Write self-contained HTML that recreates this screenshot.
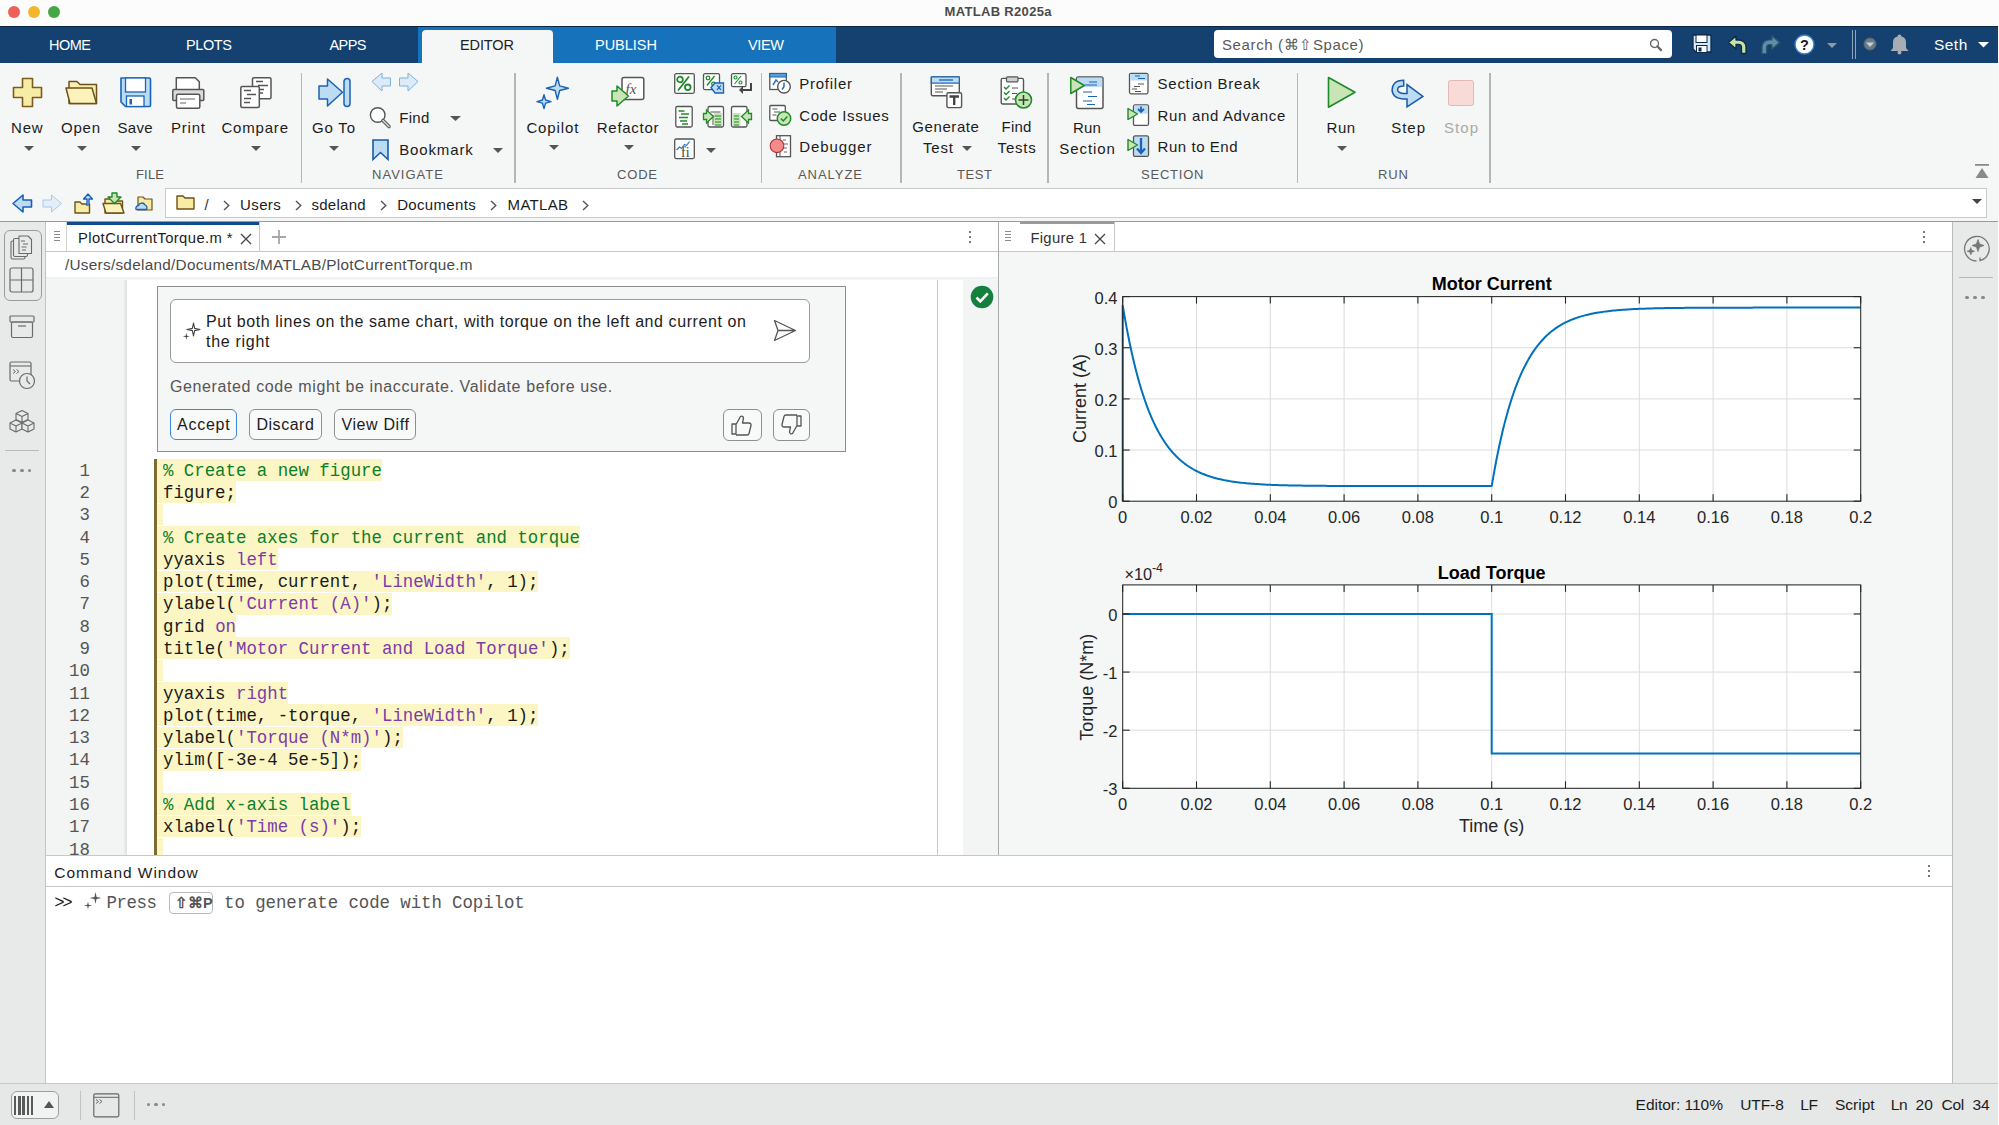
<!DOCTYPE html><html><head><meta charset="utf-8"><style>
html,body{margin:0;padding:0;width:1999px;height:1125px;overflow:hidden;background:#f5f6f6;}
.t{position:absolute;white-space:pre;}
.r{position:absolute;}
svg.r{overflow:visible}
</style></head><body>
<div class="r" style="left:0px;top:0px;width:1999px;height:26px;background:#fcfcfc"></div>
<div class="r" style="left:8px;top:6px;width:12px;height:12px;background:#ef5f57;border-radius:50%"></div>
<div class="r" style="left:28px;top:6px;width:12px;height:12px;background:#f4b72c;border-radius:50%"></div>
<div class="r" style="left:48px;top:6px;width:12px;height:12px;background:#45a644;border-radius:50%"></div>
<div class="t" style="left:944.50px;top:5.20px;font-size:13px;line-height:13px;font-family:'Liberation Sans',sans-serif;font-weight:bold;color:#4b4b4b;letter-spacing:0.328px;">MATLAB R2025a</div>
<div class="r" style="left:0px;top:26px;width:1999px;height:37px;background:#14416f"></div>
<div class="r" style="left:0px;top:26px;width:1999px;height:1px;background:#0b2544"></div>
<div class="r" style="left:418px;top:27px;width:418px;height:36px;background:#1772bc"></div>
<div class="r" style="left:422px;top:30px;width:131px;height:33px;background:#f5f6f6;border-radius:4px 4px 0 0"></div>
<div class="t" style="left:49.00px;top:37.73px;font-size:14.5px;line-height:14.5px;font-family:'Liberation Sans',sans-serif;color:#ffffff;letter-spacing:-0.500px;">HOME</div>
<div class="t" style="left:186.00px;top:37.73px;font-size:14.5px;line-height:14.5px;font-family:'Liberation Sans',sans-serif;color:#ffffff;letter-spacing:-0.386px;">PLOTS</div>
<div class="t" style="left:329.50px;top:37.73px;font-size:14.5px;line-height:14.5px;font-family:'Liberation Sans',sans-serif;color:#ffffff;letter-spacing:-0.563px;">APPS</div>
<div class="t" style="left:460.00px;top:37.73px;font-size:14.5px;line-height:14.5px;font-family:'Liberation Sans',sans-serif;color:#222222;letter-spacing:-0.104px;">EDITOR</div>
<div class="t" style="left:595.00px;top:37.73px;font-size:14.5px;line-height:14.5px;font-family:'Liberation Sans',sans-serif;color:#ffffff;letter-spacing:-0.009px;">PUBLISH</div>
<div class="t" style="left:748.00px;top:37.73px;font-size:14.5px;line-height:14.5px;font-family:'Liberation Sans',sans-serif;color:#ffffff;letter-spacing:-0.353px;">VIEW</div>
<div class="r" style="left:1214px;top:30px;width:458px;height:28px;background:#ffffff;border-radius:4px"></div>
<div class="t" style="left:1222.00px;top:36.50px;font-size:15px;line-height:15px;font-family:'Liberation Sans',sans-serif;color:#5a5a5a;letter-spacing:0.619px;">Search (⌘⇧Space)</div>
<div class="r" style="left:0px;top:63px;width:1999px;height:124px;background:#f5f6f6"></div>
<div class="r" style="left:165px;top:188px;width:1822px;height:30px;background:#fff;border:1px solid #c9caca;box-sizing:border-box"></div>
<div class="r" style="left:0px;top:221px;width:1999px;height:1px;background:#9a9a9a"></div>
<div class="r" style="left:0px;top:222px;width:45px;height:861px;background:#e8e9e9"></div>
<div class="r" style="left:45px;top:222px;width:1px;height:861px;background:#c2c3c3"></div>
<div class="r" style="left:46px;top:222px;width:952px;height:29px;background:#ffffff"></div>
<div class="r" style="left:46px;top:251px;width:952px;height:1px;background:#c6c7c7"></div>
<div class="r" style="left:46px;top:252px;width:952px;height:25px;background:#ffffff"></div>
<div class="r" style="left:46px;top:277px;width:952px;height:578px;background:#ffffff"></div>
<div class="r" style="left:46px;top:277px;width:81px;height:578px;background:#f3f4f4"></div>
<div class="r" style="left:123px;top:280px;width:4px;height:575px;background:linear-gradient(to right,#f3f4f4,#dedfdf)"></div>
<div class="r" style="left:937px;top:277px;width:1px;height:578px;background:#c8c8c8"></div>
<div class="r" style="left:963px;top:277px;width:35px;height:578px;background:#f3f4f4"></div>
<div class="r" style="left:998px;top:222px;width:1px;height:633px;background:#a9aaaa"></div>
<div class="r" style="left:999px;top:222px;width:953px;height:29px;background:#ffffff"></div>
<div class="r" style="left:999px;top:251px;width:953px;height:1px;background:#c6c7c7"></div>
<div class="r" style="left:999px;top:252px;width:953px;height:603px;background:#f5f6f6"></div>
<div class="r" style="left:1952px;top:222px;width:47px;height:861px;background:#e8e9e9"></div>
<div class="r" style="left:1952px;top:222px;width:1px;height:861px;background:#b9baba"></div>
<div class="r" style="left:46px;top:855px;width:1906px;height:1px;background:#c6c7c7"></div>
<div class="r" style="left:46px;top:856px;width:1906px;height:30px;background:#ffffff"></div>
<div class="r" style="left:46px;top:886px;width:1906px;height:1px;background:#c6c7c7"></div>
<div class="r" style="left:46px;top:887px;width:1906px;height:196px;background:#ffffff"></div>
<div class="r" style="left:0px;top:1083px;width:1999px;height:1px;background:#c6c7c7"></div>
<div class="r" style="left:0px;top:1084px;width:1999px;height:41px;background:#e6e7e7"></div>
<div class="r" style="left:300.5px;top:73px;width:1.5px;height:110px;background:#b4b5b5"></div>
<div class="r" style="left:514px;top:73px;width:1.5px;height:110px;background:#b4b5b5"></div>
<div class="r" style="left:760.5px;top:73px;width:1.5px;height:110px;background:#b4b5b5"></div>
<div class="r" style="left:900px;top:73px;width:1.5px;height:110px;background:#b4b5b5"></div>
<div class="r" style="left:1047px;top:73px;width:1.5px;height:110px;background:#b4b5b5"></div>
<div class="r" style="left:1296.7px;top:73px;width:1.5px;height:110px;background:#b4b5b5"></div>
<div class="r" style="left:1489px;top:73px;width:1.5px;height:110px;background:#b4b5b5"></div>
<div class="t" style="left:136.00px;top:168.00px;font-size:13px;line-height:13px;font-family:'Liberation Sans',sans-serif;color:#595959;letter-spacing:0.182px;">FILE</div>
<div class="t" style="left:372.00px;top:168.00px;font-size:13px;line-height:13px;font-family:'Liberation Sans',sans-serif;color:#595959;letter-spacing:1.027px;">NAVIGATE</div>
<div class="t" style="left:617.00px;top:168.00px;font-size:13px;line-height:13px;font-family:'Liberation Sans',sans-serif;color:#595959;letter-spacing:0.813px;">CODE</div>
<div class="t" style="left:798.00px;top:168.00px;font-size:13px;line-height:13px;font-family:'Liberation Sans',sans-serif;color:#595959;letter-spacing:0.953px;">ANALYZE</div>
<div class="t" style="left:957.00px;top:168.00px;font-size:13px;line-height:13px;font-family:'Liberation Sans',sans-serif;color:#595959;letter-spacing:0.592px;">TEST</div>
<div class="t" style="left:1141.00px;top:168.00px;font-size:13px;line-height:13px;font-family:'Liberation Sans',sans-serif;color:#595959;letter-spacing:0.786px;">SECTION</div>
<div class="t" style="left:1378.00px;top:168.00px;font-size:13px;line-height:13px;font-family:'Liberation Sans',sans-serif;color:#595959;letter-spacing:0.917px;">RUN</div>
<svg class="r" style="left:12px;top:77px" width="31" height="31" viewBox="0 0 31 31"><path d="M10.5 1.5 h10 v9 h9 v10 h-9 v9 h-10 v-9 h-9 v-10 h9 z" fill="#f7eca6" stroke="#7b5b1e" stroke-width="1.6" stroke-linejoin="round"/></svg>
<svg class="r" style="left:65px;top:80px" width="33" height="25" viewBox="0 0 33 25"><path d="M4 1.5 h8 l3 3 h16.5 v19 h-27.5 z" fill="#f9efb3" stroke="#6f5218" stroke-width="1.5" stroke-linejoin="round"/><path d="M1 8 h26 l4.5 15.5 h-26.5 z" fill="#fbf3bb" stroke="#6f5218" stroke-width="1.5" stroke-linejoin="round"/></svg>
<svg class="r" style="left:120px;top:77px" width="31" height="30" viewBox="0 0 31 30"><path d="M1 1 h28 a1.5 1.5 0 0 1 1.5 1.5 v26 a1 1 0 0 1 -1 1 h-24 l-4.5 -4.5 z" fill="#bcdcf4" stroke="#1a63b6" stroke-width="1.6" stroke-linejoin="round"/><rect x="5.5" y="1" width="20" height="14" fill="#fff" stroke="#1a63b6" stroke-width="1.3"/><rect x="6.5" y="19" width="17.5" height="10.5" fill="#fff" stroke="#1a63b6" stroke-width="1.3"/><rect x="9.5" y="22" width="2.5" height="5.5" fill="#1a63b6"/></svg>
<svg class="r" style="left:172px;top:77px" width="33" height="32" viewBox="0 0 33 32"><path d="M4.3 0.8 h19 l4 4 v8 h-23 z" fill="#fff" stroke="#555" stroke-width="1.5" stroke-linejoin="round"/><rect x="0.8" y="12.5" width="31" height="11" rx="1" fill="#dcdcdc" stroke="#555" stroke-width="1.5"/><rect x="4.5" y="17.2" width="23.3" height="14" rx="1.5" fill="#fff" stroke="#555" stroke-width="1.5"/><path d="M8 22 h15 M8 26 h6" stroke="#666" stroke-width="1.2"/></svg>
<svg class="r" style="left:240px;top:77px" width="32" height="32" viewBox="0 0 32 32"><rect x="12.5" y="0.8" width="18.5" height="21" rx="1.5" fill="#fff" stroke="#555" stroke-width="1.5"/><path d="M16 4.5 h7 M18 8.5 h10 M18 12.5 h6 M18 16 h5" stroke="#555" stroke-width="1.3"/><rect x="0.8" y="9.5" width="18.5" height="21" rx="1.5" fill="#fff" stroke="#555" stroke-width="1.5"/><path d="M4 13.5 h7 M7 17.5 h9 M4 21.5 h7 M4 25.5 h6" stroke="#555" stroke-width="1.3"/></svg>
<div class="t" style="left:11.00px;top:120.10px;font-size:15px;line-height:15px;font-family:'Liberation Sans',sans-serif;color:#1c1c1c;letter-spacing:0.796px;">New</div>
<div class="t" style="left:61.00px;top:120.10px;font-size:15px;line-height:15px;font-family:'Liberation Sans',sans-serif;color:#1c1c1c;letter-spacing:0.768px;">Open</div>
<div class="t" style="left:117.50px;top:120.10px;font-size:15px;line-height:15px;font-family:'Liberation Sans',sans-serif;color:#1c1c1c;letter-spacing:0.270px;">Save</div>
<div class="t" style="left:171.00px;top:120.10px;font-size:15px;line-height:15px;font-family:'Liberation Sans',sans-serif;color:#1c1c1c;letter-spacing:0.789px;">Print</div>
<div class="t" style="left:221.40px;top:120.10px;font-size:15px;line-height:15px;font-family:'Liberation Sans',sans-serif;color:#1c1c1c;letter-spacing:0.818px;">Compare</div>
<svg class="r" style="left:23.7px;top:145.5px" width="10" height="5" viewBox="0 0 10 5"><path d="M0 0 L10 0 L5.0 5 Z" fill="#555555"/></svg>
<svg class="r" style="left:76.5px;top:145.5px" width="10" height="5" viewBox="0 0 10 5"><path d="M0 0 L10 0 L5.0 5 Z" fill="#555555"/></svg>
<svg class="r" style="left:131.3px;top:145.5px" width="10" height="5" viewBox="0 0 10 5"><path d="M0 0 L10 0 L5.0 5 Z" fill="#555555"/></svg>
<svg class="r" style="left:251.0px;top:145.5px" width="10" height="5" viewBox="0 0 10 5"><path d="M0 0 L10 0 L5.0 5 Z" fill="#555555"/></svg>
<svg class="r" style="left:318px;top:78px" width="33" height="29" viewBox="0 0 33 29"><path d="M1 8 h8.5 v-7 l15 13.3 l-15 13.7 v-7 h-8.5 z" fill="#bcdcf4" stroke="#1a63b6" stroke-width="1.5" stroke-linejoin="round"/><rect x="26" y="0.5" width="6" height="28" rx="3" fill="#bcdcf4" stroke="#1a63b6" stroke-width="1.5"/></svg>
<div class="t" style="left:312.00px;top:120.10px;font-size:15px;line-height:15px;font-family:'Liberation Sans',sans-serif;color:#1c1c1c;letter-spacing:0.813px;">Go To</div>
<svg class="r" style="left:329.0px;top:145.5px" width="10" height="5" viewBox="0 0 10 5"><path d="M0 0 L10 0 L5.0 5 Z" fill="#555555"/></svg>
<svg class="r" style="left:371px;top:72px" width="48" height="20" viewBox="0 0 48 20"><path d="M1 9.5 l10 -8.5 v5 h8.5 v8 h-8.5 v5 z" fill="#ddebf8" stroke="#7fb0e0" stroke-width="1" stroke-linejoin="round"/><path d="M47 9.5 l-10 -8.5 v5 h-8.5 v8 h8.5 v5 z" fill="#ddebf8" stroke="#7fb0e0" stroke-width="1" stroke-linejoin="round"/></svg>
<svg class="r" style="left:369px;top:106px" width="23" height="22" viewBox="0 0 23 22"><circle cx="8.7" cy="9" r="7.3" fill="#fff" stroke="#555" stroke-width="1.4"/><path d="M14 14.5 l6 6" stroke="#555" stroke-width="3.6" stroke-linecap="round"/><path d="M14 14.5 l6 6" stroke="#d8d8d8" stroke-width="1.6" stroke-linecap="round"/></svg>
<div class="t" style="left:399.20px;top:110.00px;font-size:15px;line-height:15px;font-family:'Liberation Sans',sans-serif;color:#1c1c1c;letter-spacing:0.340px;">Find</div>
<svg class="r" style="left:450.0px;top:115.8px" width="11" height="5" viewBox="0 0 11 5"><path d="M0 0 L11 0 L5.5 5 Z" fill="#555555"/></svg>
<svg class="r" style="left:372px;top:139px" width="17" height="21" viewBox="0 0 17 21"><path d="M1 1 h15 v19.5 l-7.5 -7 l-7.5 7 z" fill="#bcdcf4" stroke="#1a5aa8" stroke-width="1.6" stroke-linejoin="miter"/></svg>
<div class="t" style="left:399.20px;top:141.50px;font-size:15px;line-height:15px;font-family:'Liberation Sans',sans-serif;color:#1c1c1c;letter-spacing:0.868px;">Bookmark</div>
<svg class="r" style="left:493.0px;top:147.8px" width="10" height="5" viewBox="0 0 10 5"><path d="M0 0 L10 0 L5.0 5 Z" fill="#555555"/></svg>
<svg class="r" style="left:530px;top:70px" width="40" height="40" viewBox="0 0 40 40"><polygon points="27.40,7.20 29.66,15.94 38.40,18.20 29.66,20.46 27.40,29.20 25.14,20.46 16.40,18.20 25.14,15.94" fill="#bcdcf4" stroke="#1a63b6" stroke-width="1.4" stroke-linejoin="round"/><polygon points="14.00,24.60 15.56,30.04 21.00,31.60 15.56,33.16 14.00,38.60 12.44,33.16 7.00,31.60 12.44,30.04" fill="#bcdcf4" stroke="#1a63b6" stroke-width="1.4" stroke-linejoin="round"/></svg>
<div class="t" style="left:526.40px;top:120.10px;font-size:15px;line-height:15px;font-family:'Liberation Sans',sans-serif;color:#1c1c1c;letter-spacing:0.884px;">Copilot</div>
<svg class="r" style="left:548.6px;top:145.0px" width="10" height="5" viewBox="0 0 10 5"><path d="M0 0 L10 0 L5.0 5 Z" fill="#555555"/></svg>
<svg class="r" style="left:610px;top:76px" width="36" height="32" viewBox="0 0 36 32"><rect x="12" y="1.4" width="21.8" height="22" rx="2" fill="#fff" stroke="#555" stroke-width="1.5"/><text x="15.5" y="17.5" font-family="Liberation Serif" font-style="italic" font-size="15" fill="#555">fx</text><path d="M2 15 h5 v-5 l11.5 10 l-11.5 10 v-5 h-5 z" fill="#c9e5b5" stroke="#1f8a2a" stroke-width="1.5" stroke-linejoin="round"/></svg>
<div class="t" style="left:596.80px;top:120.10px;font-size:15px;line-height:15px;font-family:'Liberation Sans',sans-serif;color:#1c1c1c;letter-spacing:0.716px;">Refactor</div>
<svg class="r" style="left:623.8px;top:145.0px" width="10" height="5" viewBox="0 0 10 5"><path d="M0 0 L10 0 L5.0 5 Z" fill="#555555"/></svg>
<svg class="r" style="left:674px;top:73px" width="80" height="90" viewBox="0 0 80 90"><rect x="0.7" y="0.7" width="19.6" height="19.6" rx="1.5" fill="#fff" stroke="#555" stroke-width="1.3"/><circle cx="6" cy="6.5" r="2.8" fill="none" stroke="#1f8a2a" stroke-width="1.8"/><circle cx="13.8" cy="14.3" r="2.8" fill="none" stroke="#1f8a2a" stroke-width="1.8"/><path d="M4 17.5 l11 -14" stroke="#1f8a2a" stroke-width="1.8"/><rect x="29.5" y="0.7" width="16" height="16" rx="1.5" fill="#fff" stroke="#555" stroke-width="1.3"/><circle cx="34" cy="5" r="1.8" fill="none" stroke="#1f8a2a" stroke-width="1.3"/><circle cx="39.5" cy="11" r="1.8" fill="none" stroke="#1f8a2a" stroke-width="1.3"/><path d="M33 12.5 l7.5 -9.5" stroke="#1f8a2a" stroke-width="1.3"/><path d="M37 14.5 l4 -4.5 h8.5 v10 h-8.5 z" fill="#bcdcf4" stroke="#1a63b6" stroke-width="1.3"/><path d="M43 12.3 l4 4.5 M47 12.3 l-4 4.5" stroke="#1a63b6" stroke-width="1.2"/><rect x="57.5" y="0.7" width="14.5" height="13" rx="1.5" fill="#fff" stroke="#555" stroke-width="1.3"/><circle cx="61.5" cy="4.5" r="1.5" fill="none" stroke="#1f8a2a" stroke-width="1.1"/><circle cx="66.5" cy="9.5" r="1.5" fill="none" stroke="#1f8a2a" stroke-width="1.1"/><path d="M60.5 11 l6.5 -8" stroke="#1f8a2a" stroke-width="1.1"/><path d="M76 10 v6 h-7 v-3 l-4 4 l4 4 v-3 h9 v-8 z" fill="#444"/><rect x="1.8" y="33.5" width="16.4" height="20.5" rx="1.5" fill="#fff" stroke="#555" stroke-width="1.3"/><path d="M4.5 38 h6 M7 41 h8 M5 44.5 h9 M6 48 h7 M8 51 h6" stroke="#1f8a2a" stroke-width="1.4"/><rect x="34" y="33.5" width="15.5" height="20.5" rx="1.5" fill="#fff" stroke="#555" stroke-width="1.3"/><path d="M36.5 39 h10 M39 42 v10" stroke="#555" stroke-width="1"/><rect x="40" y="40" width="8" height="13" fill="#c9e5b5"/><path d="M41 43 h6 M41 46 h6 M41 49 h6 M41 52 h6" stroke="#1f8a2a" stroke-width="1.2"/><path d="M29.5 40.5 h3 v-3.5 l7 6.5 l-7 6.5 v-3.5 h-3 z" fill="#c9e5b5" stroke="#1f8a2a" stroke-width="1.3"/><rect x="57.5" y="33.5" width="15.5" height="20.5" rx="1.5" fill="#fff" stroke="#555" stroke-width="1.3"/><rect x="58.5" y="40" width="8" height="13" fill="#c9e5b5"/><path d="M60 43 h5 M60 46 h5 M60 49 h5 M60 52 h5" stroke="#1f8a2a" stroke-width="1.2"/><path d="M77.5 40.5 h-3 v-3.5 l-7 6.5 l7 6.5 v-3.5 h3 z" fill="#c9e5b5" stroke="#1f8a2a" stroke-width="1.3"/><rect x="0.7" y="66" width="19.6" height="19.6" rx="1.5" fill="#fff" stroke="#555" stroke-width="1.3"/><path d="M2.5 77 l3 -3 l2 1.5 l3 -4 l2 1 l3 -4" stroke="#2f78c8" stroke-width="1.2" fill="none"/><text x="7" y="84" font-family="Liberation Serif" font-size="14" fill="#444">fi</text></svg>
<svg class="r" style="left:705.5px;top:147.8px" width="10" height="5" viewBox="0 0 10 5"><path d="M0 0 L10 0 L5.0 5 Z" fill="#555555"/></svg>
<svg class="r" style="left:769px;top:72px" width="24" height="24" viewBox="0 0 24 24"><rect x="0.8" y="1.5" width="16.5" height="16" fill="#fff" stroke="#555" stroke-width="1.3"/><rect x="0.8" y="1.5" width="16.5" height="3.5" fill="#5c9ddc" stroke="#1a63b6" stroke-width="1"/><path d="M4 13 l3 -5 l2 2" stroke="#2f78c8" stroke-width="1.6" fill="none"/><circle cx="15" cy="14.7" r="6.3" fill="#fff" stroke="#555" stroke-width="1.4"/><path d="M15 10.5 v4.2 l-2 3" stroke="#1a63b6" stroke-width="1.4" fill="none"/></svg>
<div class="t" style="left:799.20px;top:76.20px;font-size:15px;line-height:15px;font-family:'Liberation Sans',sans-serif;color:#1c1c1c;letter-spacing:0.755px;">Profiler</div>
<svg class="r" style="left:769px;top:104px" width="24" height="24" viewBox="0 0 24 24"><rect x="0.8" y="1.5" width="15.5" height="15" rx="1" fill="#fff" stroke="#555" stroke-width="1.3"/><path d="M3.5 5 h5 M5 8 h6 M3.5 11 h4" stroke="#555" stroke-width="1.1"/><circle cx="15" cy="14.5" r="6.7" fill="#c9e5b5" stroke="#1f8a2a" stroke-width="1.5"/><path d="M11.8 14.5 l2.4 2.4 l4.2 -4.5" stroke="#1f8a2a" stroke-width="1.5" fill="none"/></svg>
<div class="t" style="left:799.20px;top:107.90px;font-size:15px;line-height:15px;font-family:'Liberation Sans',sans-serif;color:#1c1c1c;letter-spacing:0.622px;">Code Issues</div>
<svg class="r" style="left:769px;top:135px" width="23" height="23" viewBox="0 0 23 23"><rect x="7.5" y="0.7" width="14" height="21" fill="#fff" stroke="#555" stroke-width="1.3"/><path d="M11 0.7 v21" stroke="#555" stroke-width="1"/><path d="M14 5 h3 M15 9 h4 M14 13 h4 M15 17 h3" stroke="#666" stroke-width="1"/><circle cx="8" cy="10.8" r="6.8" fill="#f28b8b" stroke="#b53131" stroke-width="1.1"/></svg>
<div class="t" style="left:799.20px;top:138.90px;font-size:15px;line-height:15px;font-family:'Liberation Sans',sans-serif;color:#1c1c1c;letter-spacing:0.917px;">Debugger</div>
<svg class="r" style="left:930px;top:76px" width="33" height="33" viewBox="0 0 33 33"><rect x="1.3" y="0.9" width="28" height="18.8" rx="1.5" fill="#fff" stroke="#555" stroke-width="1.4"/><rect x="1.3" y="0.9" width="28" height="6.2" fill="#bcdcf4" stroke="#1a63b6" stroke-width="1.2"/><path d="M9 4 h14" stroke="#1a63b6" stroke-width="1.3"/><path d="M5 10 h18 M5 13 h12 M5 16 h8" stroke="#555" stroke-width="1.1"/><rect x="16.9" y="16.8" width="14.7" height="14.8" rx="1.5" fill="#fff" stroke="#555" stroke-width="1.4"/><path d="M19.5 20.5 h9.5 M24.2 20.5 v8.5" stroke="#444" stroke-width="2.4"/></svg>
<div class="t" style="left:912.30px;top:119.40px;font-size:15px;line-height:15px;font-family:'Liberation Sans',sans-serif;color:#1c1c1c;letter-spacing:0.580px;">Generate</div>
<div class="t" style="left:923.00px;top:140.30px;font-size:15px;line-height:15px;font-family:'Liberation Sans',sans-serif;color:#1c1c1c;letter-spacing:0.797px;">Test</div>
<svg class="r" style="left:961.6px;top:146.0px" width="10" height="5" viewBox="0 0 10 5"><path d="M0 0 L10 0 L5.0 5 Z" fill="#555555"/></svg>
<svg class="r" style="left:1000px;top:76px" width="34" height="34" viewBox="0 0 34 34"><rect x="1.2" y="2.4" width="22.3" height="25.6" rx="1.5" fill="#fff" stroke="#555" stroke-width="1.4"/><rect x="6.5" y="0.8" width="11.5" height="5" rx="1" fill="#cfcfcf" stroke="#555" stroke-width="1.2"/><path d="M4 11 l2 2 l3.5 -3.5 M4 16.5 l2 2 l3.5 -3.5 M4 22 l2 2 l3.5 -3.5" stroke="#1f8a2a" stroke-width="1.4" fill="none"/><path d="M12 12 h6 M12 17.5 h5 M12 23 h4" stroke="#555" stroke-width="1.2"/><circle cx="23.5" cy="24" r="8" fill="#c9e5b5" stroke="#1f8a2a" stroke-width="1.6"/><path d="M23.5 19 v10 M18.5 24 h10" stroke="#1f4a22" stroke-width="1.5"/></svg>
<div class="t" style="left:1001.50px;top:119.40px;font-size:15px;line-height:15px;font-family:'Liberation Sans',sans-serif;color:#1c1c1c;letter-spacing:0.240px;">Find</div>
<div class="t" style="left:997.60px;top:140.30px;font-size:15px;line-height:15px;font-family:'Liberation Sans',sans-serif;color:#1c1c1c;letter-spacing:0.798px;">Tests</div>
<svg class="r" style="left:1069px;top:76px" width="36" height="34" viewBox="0 0 36 34"><rect x="7.5" y="0.9" width="26.5" height="31.5" rx="2" fill="#fff" stroke="#555" stroke-width="1.5"/><rect x="8.2" y="1.6" width="25" height="9.5" fill="#bcdcf4"/><path d="M20 6 h8 M16 9 h12 M14 16 h9 M19 20.5 h9 M14 25 h9 M18 28.5 h8" stroke="#1a63b6" stroke-width="1.2"/><path d="M1.8 1.5 l13.5 8 l-13.5 8 z" fill="#c9e5b5" stroke="#1f8a2a" stroke-width="1.5" stroke-linejoin="round"/></svg>
<div class="t" style="left:1072.90px;top:119.80px;font-size:15px;line-height:15px;font-family:'Liberation Sans',sans-serif;color:#1c1c1c;letter-spacing:0.191px;">Run</div>
<div class="t" style="left:1059.30px;top:140.80px;font-size:15px;line-height:15px;font-family:'Liberation Sans',sans-serif;color:#1c1c1c;letter-spacing:0.911px;">Section</div>
<svg class="r" style="left:1128px;top:72px" width="22" height="23" viewBox="0 0 22 23"><rect x="1.5" y="1.3" width="18.5" height="20.5" rx="1.5" fill="#fff" stroke="#555" stroke-width="1.3"/><rect x="2.2" y="2" width="17" height="6.5" fill="#bcdcf4"/><path d="M7 4 h5 M10 6.5 h7" stroke="#1a63b6" stroke-width="1.1"/><path d="M10 12 h6 M6 14.5 h6 M4 17 h5 M7 19.5 h6" stroke="#555" stroke-width="1"/></svg>
<div class="t" style="left:1157.60px;top:76.40px;font-size:15px;line-height:15px;font-family:'Liberation Sans',sans-serif;color:#1c1c1c;letter-spacing:0.726px;">Section Break</div>
<svg class="r" style="left:1127px;top:104px" width="24" height="24" viewBox="0 0 24 24"><rect x="6.5" y="0.9" width="15" height="20.5" rx="1.5" fill="#fff" stroke="#555" stroke-width="1.3"/><rect x="7.2" y="1.6" width="13.6" height="8" fill="#bcdcf4"/><path d="M14 2.5 v5 M11 5 l3 3 l3 -3" stroke="#1a63b6" stroke-width="1.8" fill="none"/><path d="M1 4.5 l9.5 5.5 l-9.5 5.5 z" fill="#c9e5b5" stroke="#1f8a2a" stroke-width="1.4" stroke-linejoin="round"/></svg>
<div class="t" style="left:1157.60px;top:108.10px;font-size:15px;line-height:15px;font-family:'Liberation Sans',sans-serif;color:#1c1c1c;letter-spacing:0.662px;">Run and Advance</div>
<svg class="r" style="left:1127px;top:135px" width="24" height="24" viewBox="0 0 24 24"><rect x="6.5" y="0.9" width="15" height="20.5" rx="1.5" fill="#bcdcf4" stroke="#555" stroke-width="1.3"/><path d="M14 3 v14 M10 13.5 l4 4.5 l4 -4.5" stroke="#1a63b6" stroke-width="2.3" fill="none"/><path d="M1 4.5 l9.5 5.5 l-9.5 5.5 z" fill="#c9e5b5" stroke="#1f8a2a" stroke-width="1.4" stroke-linejoin="round"/></svg>
<div class="t" style="left:1157.60px;top:139.20px;font-size:15px;line-height:15px;font-family:'Liberation Sans',sans-serif;color:#1c1c1c;letter-spacing:0.550px;">Run to End</div>
<svg class="r" style="left:1327px;top:76px" width="30" height="33" viewBox="0 0 30 33"><path d="M1.5 1.5 L28 16.3 L1.5 31.2 Z" fill="#c9e5b5" stroke="#1f8a2a" stroke-width="1.6" stroke-linejoin="round"/></svg>
<div class="t" style="left:1326.60px;top:119.80px;font-size:15px;line-height:15px;font-family:'Liberation Sans',sans-serif;color:#1c1c1c;letter-spacing:0.541px;">Run</div>
<svg class="r" style="left:1337.2px;top:145.8px" width="10" height="5" viewBox="0 0 10 5"><path d="M0 0 L10 0 L5.0 5 Z" fill="#555555"/></svg>
<svg class="r" style="left:1390px;top:78px" width="35" height="32" viewBox="0 0 35 32"><path d="M13.7 2.2 C5 2.2 2.1 7 2.1 11.8 C2.1 17 6 20.9 13 20.9 L17 20.9 L17 28.9 L32.9 18.4 L17 6.6 L17 15.4 L13 15.4 C9.5 15.4 7.6 13.5 7.6 11.5 C7.6 9.5 10 8 13.7 8 Z" fill="#bcdcf4" stroke="#1a5aa8" stroke-width="1.5" stroke-linejoin="miter"/></svg>
<div class="t" style="left:1391.20px;top:119.80px;font-size:15px;line-height:15px;font-family:'Liberation Sans',sans-serif;color:#1c1c1c;letter-spacing:0.981px;">Step</div>
<div class="r" style="left:1448px;top:80.2px;width:26px;height:25.6px;background:#f8dad6;border:1px solid #e2b9b5;box-sizing:border-box;border-radius:2.5px"></div>
<div class="t" style="left:1443.90px;top:119.80px;font-size:15px;line-height:15px;font-family:'Liberation Sans',sans-serif;color:#a9a9a9;letter-spacing:1.081px;">Stop</div>
<svg class="r" style="left:1975px;top:164px" width="14" height="15" viewBox="0 0 14 15"><rect x="0" y="0" width="14" height="1.8" fill="#8a8a8a"/><path d="M7 4 L13.5 14 L0.5 14 Z" fill="#8a8a8a"/></svg>
<svg class="r" style="left:1649px;top:38px" width="14" height="14" viewBox="0 0 14 14"><circle cx="5.5" cy="5.5" r="4" fill="none" stroke="#666" stroke-width="1.3"/><path d="M8.3 8.3 l3.8 3.8" stroke="#666" stroke-width="2.2" stroke-linecap="round"/></svg>
<svg class="r" style="left:1692px;top:34px" width="20" height="20" viewBox="0 0 20 20"><path d="M1 1 h17 a1 1 0 0 1 1 1 v16 h-15 l-3 -3 z" fill="#d6e8f8" stroke="#0c2a4c" stroke-width="1.3"/><rect x="4" y="1" width="11" height="7.5" fill="#fff" stroke="#0c2a4c" stroke-width="1"/><rect x="4.5" y="11.5" width="10.5" height="7" fill="#fff" stroke="#0c2a4c" stroke-width="1"/><rect x="6.5" y="13.5" width="3" height="4" fill="#0c2a4c"/></svg>
<svg class="r" style="left:1727px;top:35px" width="21" height="20" viewBox="0 0 21 20"><path d="M1.5 7.5 l7.5 -6.5 v4 h3 a7 7 0 0 1 7 7 v6.5 h-4.5 v-6 a3 3 0 0 0 -3 -3 h-2.5 v4.5 z" fill="#c8e2a6" stroke="#0c2a4c" stroke-width="1.3" stroke-linejoin="round"/></svg>
<svg class="r" style="left:1760px;top:35px" width="21" height="20" viewBox="0 0 21 20"><path d="M19.5 7.5 l-7.5 -6.5 v4 h-3 a7 7 0 0 0 -7 7 v6.5 h4.5 v-6 a3 3 0 0 1 3 -3 h2.5 v4.5 z" fill="#5f8fa6" stroke="#2c5a70" stroke-width="1.2" stroke-linejoin="round"/></svg>
<svg class="r" style="left:1794px;top:34px" width="21" height="21" viewBox="0 0 21 21"><circle cx="10.5" cy="10.5" r="9.5" fill="#fff" stroke="#2f7fd0" stroke-width="1.4"/><text x="10.5" y="16" text-anchor="middle" font-family="Liberation Sans" font-weight="bold" font-size="14.5" fill="#1a1a1a">?</text></svg>
<svg class="r" style="left:1826.5px;top:42.5px" width="10" height="5" viewBox="0 0 10 5"><path d="M0 0 L10 0 L5.0 5 Z" fill="#8d9aa8"/></svg>
<div class="r" style="left:1852px;top:30px;width:1.2px;height:29px;background:#8fa3b8"></div>
<div class="r" style="left:1854.5px;top:30px;width:1.2px;height:29px;background:#8fa3b8"></div>
<svg class="r" style="left:1863px;top:37px" width="14" height="14" viewBox="0 0 14 14"><circle cx="7" cy="7" r="6" fill="#6c7a88" stroke="#5a6570" stroke-width="1"/><path d="M3 5.5 h8 l-4 4.5 z" fill="#c9d1d8"/></svg>
<svg class="r" style="left:1889px;top:33px" width="21" height="21" viewBox="0 0 21 21"><path d="M10.5 1.5 a2 2 0 0 1 2 2 a6 6 0 0 1 4.5 6 v5.5 l2.5 3 h-18 l2.5 -3 v-5.5 a6 6 0 0 1 4.5 -6 a2 2 0 0 1 2 -2 z" fill="#a6adb3"/><circle cx="10.5" cy="19.5" r="2" fill="#a6adb3"/></svg>
<div class="t" style="left:1933.90px;top:36.78px;font-size:15.5px;line-height:15.5px;font-family:'Liberation Sans',sans-serif;color:#ffffff;letter-spacing:0.505px;">Seth</div>
<svg class="r" style="left:1977.9px;top:41.95px" width="11" height="5.5" viewBox="0 0 11 5.5"><path d="M0 0 L11 0 L5.5 5.5 Z" fill="#ffffff"/></svg>
<svg class="r" style="left:12px;top:194px" width="21" height="19" viewBox="0 0 21 19"><path d="M1 9.5 l10 -8.5 v5 h8.5 v7 h-8.5 v5 z" fill="#bcdcf4" stroke="#1a5fb4" stroke-width="1.6" stroke-linejoin="round"/></svg>
<svg class="r" style="left:42px;top:194px" width="21" height="19" viewBox="0 0 21 19"><path d="M19.5 9.5 l-10 -8.5 v5 h-8.5 v7 h8.5 v5 z" fill="#e3eef9" stroke="#a9c8e8" stroke-width="1" stroke-linejoin="round"/></svg>
<svg class="r" style="left:74px;top:193px" width="20" height="21" viewBox="0 0 20 21"><path d="M1 9 h5 l2 2 h7.5 v9 h-14.5 z" fill="#f7eca6" stroke="#6f5218" stroke-width="1.4" stroke-linejoin="round"/><path d="M13 13 v-7 h-3.5 l4.5 -5 l4.5 5 h-3.5 v7" fill="#bcdcf4" stroke="#1a5fb4" stroke-width="1.3" stroke-linejoin="round"/></svg>
<svg class="r" style="left:102px;top:192px" width="23" height="22" viewBox="0 0 23 22"><path d="M3 7 h6 l2 2 h9.5 v12 h-17.5 z" fill="#f7eca6" stroke="#6f5218" stroke-width="1.4" stroke-linejoin="round"/><path d="M1 11.5 h17.5 l3.5 9.5 h-18 z" fill="#fbf3bb" stroke="#6f5218" stroke-width="1.4" stroke-linejoin="round"/><path d="M10 1 h5 v4 h4 l-6.5 6.5 l-6.5 -6.5 h4 z" fill="#c9e5b5" stroke="#1f8a2a" stroke-width="1.4" stroke-linejoin="round"/></svg>
<svg class="r" style="left:135px;top:196px" width="18" height="15" viewBox="0 0 18 15"><path d="M3 1 h5 l2 2 h7 v11 h-14 z" fill="#f7eca6" stroke="#6f5218" stroke-width="1.2" stroke-linejoin="round"/><path d="M1 13.5 a3 3 0 0 1 2.5 -4 a3.5 3.5 0 0 1 6.5 -0.5 a3 3 0 0 1 1.5 4.5 z" fill="#bcdcf4" stroke="#1a5fb4" stroke-width="1.3" stroke-linejoin="round"/></svg>
<svg class="r" style="left:176px;top:195px" width="19" height="15" viewBox="0 0 19 15"><path d="M1 1 h6 l2 2 h9 v11 h-17 z" fill="#f7eca6" stroke="#6f5218" stroke-width="1.4" stroke-linejoin="round"/></svg>
<div class="t" style="left:204.40px;top:196.80px;font-size:15px;line-height:15px;font-family:'Liberation Sans',sans-serif;color:#333;letter-spacing:0.000px;">/</div>
<svg class="r" style="left:223px;top:199.6px" width="7" height="10" viewBox="0 0 7 10"><path d="M1 1 l4.8 4.5 l-4.8 4.5" fill="none" stroke="#555" stroke-width="1.4"/></svg>
<svg class="r" style="left:294.5px;top:199.6px" width="7" height="10" viewBox="0 0 7 10"><path d="M1 1 l4.8 4.5 l-4.8 4.5" fill="none" stroke="#555" stroke-width="1.4"/></svg>
<svg class="r" style="left:380px;top:199.6px" width="7" height="10" viewBox="0 0 7 10"><path d="M1 1 l4.8 4.5 l-4.8 4.5" fill="none" stroke="#555" stroke-width="1.4"/></svg>
<svg class="r" style="left:490px;top:199.6px" width="7" height="10" viewBox="0 0 7 10"><path d="M1 1 l4.8 4.5 l-4.8 4.5" fill="none" stroke="#555" stroke-width="1.4"/></svg>
<svg class="r" style="left:582px;top:199.6px" width="7" height="10" viewBox="0 0 7 10"><path d="M1 1 l4.8 4.5 l-4.8 4.5" fill="none" stroke="#555" stroke-width="1.4"/></svg>
<div class="t" style="left:240.10px;top:196.80px;font-size:15px;line-height:15px;font-family:'Liberation Sans',sans-serif;color:#1c1c1c;letter-spacing:0.357px;">Users</div>
<div class="t" style="left:311.40px;top:196.80px;font-size:15px;line-height:15px;font-family:'Liberation Sans',sans-serif;color:#1c1c1c;letter-spacing:0.292px;">sdeland</div>
<div class="t" style="left:397.20px;top:196.80px;font-size:15px;line-height:15px;font-family:'Liberation Sans',sans-serif;color:#1c1c1c;letter-spacing:0.329px;">Documents</div>
<div class="t" style="left:507.60px;top:196.80px;font-size:15px;line-height:15px;font-family:'Liberation Sans',sans-serif;color:#1c1c1c;letter-spacing:0.319px;">MATLAB</div>
<svg class="r" style="left:1971.8px;top:198.5px" width="10" height="5" viewBox="0 0 10 5"><path d="M0 0 L10 0 L5.0 5 Z" fill="#444"/></svg>
<div class="r" style="left:3.5px;top:230px;width:38px;height:71px;border:1.2px solid #9a9b9b;border-radius:6px;box-sizing:border-box"></div>
<svg class="r" style="left:10px;top:235px" width="25" height="28" viewBox="0 0 25 28"><rect x="1" y="6" width="14" height="18" rx="1.5" fill="none" stroke="#6a6a6a" stroke-width="1.1"/><rect x="3.5" y="3.5" width="14" height="18" rx="1.5" fill="#e8e9e9" stroke="#6a6a6a" stroke-width="1.1"/><path d="M9 1 h9 l3.5 3.5 v14 h-12.5 z" fill="#e8e9e9" stroke="#6a6a6a" stroke-width="1.1" stroke-linejoin="round"/><path d="M11 6 h4 M13 9 h5 M11.5 12 h5 M12 15 h4" stroke="#6a6a6a" stroke-width="1"/></svg>
<svg class="r" style="left:9px;top:267px" width="25" height="27" viewBox="0 0 25 27"><rect x="1" y="1" width="23" height="24" rx="2" fill="none" stroke="#6a6a6a" stroke-width="1.2"/><path d="M12.5 1 v24 M1 13 h23" stroke="#6a6a6a" stroke-width="1.2"/></svg>
<svg class="r" style="left:9px;top:315px" width="26" height="24" viewBox="0 0 26 24"><rect x="1" y="1" width="24" height="6" rx="1" fill="none" stroke="#6a6a6a" stroke-width="1.2"/><rect x="2.5" y="7" width="21" height="15.5" rx="1.5" fill="none" stroke="#6a6a6a" stroke-width="1.2"/><path d="M9 11 h8" stroke="#6a6a6a" stroke-width="1.2"/></svg>
<svg class="r" style="left:9px;top:361px" width="27" height="29" viewBox="0 0 27 29"><rect x="1" y="1" width="21" height="19" rx="1.5" fill="none" stroke="#6a6a6a" stroke-width="1.2"/><path d="M1 5 h21" stroke="#6a6a6a" stroke-width="1.1"/><path d="M4 8.5 l2.5 2 l-2.5 2 M7.5 8.5 l2.5 2 l-2.5 2" fill="none" stroke="#6a6a6a" stroke-width="1"/><circle cx="18" cy="20" r="7.5" fill="#e8e9e9" stroke="#6a6a6a" stroke-width="1.2"/><path d="M18 15.5 v4.5 l3 3" fill="none" stroke="#6a6a6a" stroke-width="1.2"/></svg>
<svg class="r" style="left:9px;top:409px" width="26" height="27" viewBox="0 0 26 27"><path d="M13 1.5 l6 3 v6 l-6 3 l-6 -3 v-6 z M7 4.5 l6 3 l6 -3 M13 7.5 v6" fill="#e8e9e9" stroke="#6a6a6a" stroke-width="1.1" stroke-linejoin="round"/><path d="M7 11 l6 3 v6 l-6 3 l-6 -3 v-6 z M1 14 l6 3 l6 -3 M7 17 v6" fill="#e8e9e9" stroke="#6a6a6a" stroke-width="1.1" stroke-linejoin="round"/><path d="M19 11 l6 3 v6 l-6 3 l-6 -3 v-6 z M13 14 l6 3 l6 -3 M19 17 v6" fill="#e8e9e9" stroke="#6a6a6a" stroke-width="1.1" stroke-linejoin="round"/></svg>
<div class="r" style="left:5px;top:450px;width:34px;height:1px;background:#b9baba"></div>
<div class="r" style="left:12.4px;top:469px;width:3.2px;height:3.2px;background:#888;border-radius:50%"></div>
<div class="r" style="left:20.4px;top:469px;width:3.2px;height:3.2px;background:#888;border-radius:50%"></div>
<div class="r" style="left:27.9px;top:469px;width:3.2px;height:3.2px;background:#888;border-radius:50%"></div>
<svg class="r" style="left:1961px;top:234px" width="30" height="30" viewBox="0 0 30 30"><path d="M15.5 27 A12.3 12.3 0 1 1 19 26.6 L19 23.5" fill="none" stroke="#777" stroke-width="1.3"/><polygon points="17.00,5.50 18.56,9.94 23.00,11.50 18.56,13.06 17.00,17.50 15.44,13.06 11.00,11.50 15.44,9.94" fill="#777" stroke="#777" stroke-width="0.8" stroke-linejoin="round"/><polygon points="9.80,13.40 10.79,16.21 13.60,17.20 10.79,18.19 9.80,21.00 8.81,18.19 6.00,17.20 8.81,16.21" fill="#777" stroke="#777" stroke-width="0.6"/></svg>
<div class="r" style="left:1959px;top:277px;width:34px;height:1px;background:#b5b6b6"></div>
<div class="r" style="left:1965.2px;top:295.8px;width:3.6px;height:3.6px;background:#888;border-radius:50%"></div>
<div class="r" style="left:1973.2px;top:295.8px;width:3.6px;height:3.6px;background:#888;border-radius:50%"></div>
<div class="r" style="left:1981.2px;top:295.8px;width:3.6px;height:3.6px;background:#888;border-radius:50%"></div>
<div class="r" style="left:46px;top:222px;width:20px;height:29px;background:#ffffff"></div>
<div class="r" style="left:66px;top:222px;width:1px;height:29px;background:#d0d1d1"></div>
<svg class="r" style="left:53.5px;top:231px" width="6" height="11" viewBox="0 0 6 11"><path d="M0 0.5 h6 M0 3.5 h6 M0 6.5 h6 M0 9.5 h6" stroke="#8a8a8a" stroke-width="1"/></svg>
<div class="r" style="left:67px;top:221.5px;width:192px;height:3px;background:#0e4c8c"></div>
<div class="r" style="left:259px;top:222px;width:1px;height:29px;background:#c6c7c7"></div>
<div class="t" style="left:78.00px;top:231.27px;font-size:14.8px;line-height:14.8px;font-family:'Liberation Sans',sans-serif;color:#1c1c1c;letter-spacing:0.409px;">PlotCurrentTorque.m *</div>
<svg class="r" style="left:240px;top:233px" width="12" height="12" viewBox="0 0 12 12"><path d="M1 1 L11 11 M11 1 L1 11" stroke="#444" stroke-width="1.3"/></svg>
<svg class="r" style="left:272px;top:230px" width="14" height="14" viewBox="0 0 14 14"><path d="M7 0 v14 M0 7 h14" stroke="#a7a7a7" stroke-width="1.8"/></svg>
<div class="r" style="left:969.1px;top:230.5px;width:2px;height:2px;background:#4a4a4a;border-radius:50%"></div>
<div class="r" style="left:969.1px;top:235.5px;width:2px;height:2px;background:#4a4a4a;border-radius:50%"></div>
<div class="r" style="left:969.1px;top:240.5px;width:2px;height:2px;background:#4a4a4a;border-radius:50%"></div>
<div class="t" style="left:65.00px;top:257.05px;font-size:15.3px;line-height:15.3px;font-family:'Liberation Sans',sans-serif;color:#4a4a4a;letter-spacing:0.285px;">/Users/sdeland/Documents/MATLAB/PlotCurrentTorque.m</div>
<div class="r" style="left:46px;top:277px;width:952px;height:3px;background:linear-gradient(#eceded,#f6f7f7)"></div>
<div style="position:absolute;left:0;top:0;width:1999px;height:855px;overflow:hidden">
<div class="r" style="left:154.2px;top:459px;width:2.6px;height:396px;background:#7e6b2e"></div>
<div class="r" style="left:157px;top:459.1px;width:225.03px;height:21.69px;background:#fcf6c4"></div>
<div class="t" style="left:79.56px;top:462.67px;font-size:17.4px;line-height:17.4px;font-family:'Liberation Mono',monospace;color:#555555;letter-spacing:0.000px;transform:scaleY(1.1);transform-origin:0 13.33px;">1</div>
<div class="t" style="left:163.00px;top:462.67px;font-size:17.4px;line-height:17.4px;font-family:'Liberation Mono',monospace;color:#0b7f2c;letter-spacing:-0.012px;transform:scaleY(1.1);transform-origin:0 13.33px;">% Create a new figure</div>
<div class="r" style="left:157px;top:481.39px;width:79.01px;height:21.69px;background:#fcf6c4"></div>
<div class="t" style="left:79.56px;top:484.96px;font-size:17.4px;line-height:17.4px;font-family:'Liberation Mono',monospace;color:#555555;letter-spacing:0.000px;transform:scaleY(1.1);transform-origin:0 13.33px;">2</div>
<div class="t" style="left:163.00px;top:484.96px;font-size:17.4px;line-height:17.4px;font-family:'Liberation Mono',monospace;color:#1a1a1a;letter-spacing:-0.013px;transform:scaleY(1.1);transform-origin:0 13.33px;">figure;</div>
<div class="r" style="left:157px;top:503.68px;width:6.0px;height:21.69px;background:#fcf6c4"></div>
<div class="t" style="left:79.56px;top:507.25px;font-size:17.4px;line-height:17.4px;font-family:'Liberation Mono',monospace;color:#555555;letter-spacing:0.000px;transform:scaleY(1.1);transform-origin:0 13.33px;">3</div>
<div class="r" style="left:157px;top:525.97px;width:423.2px;height:21.69px;background:#fcf6c4"></div>
<div class="t" style="left:79.56px;top:529.54px;font-size:17.4px;line-height:17.4px;font-family:'Liberation Mono',monospace;color:#555555;letter-spacing:0.000px;transform:scaleY(1.1);transform-origin:0 13.33px;">4</div>
<div class="t" style="left:163.00px;top:529.54px;font-size:17.4px;line-height:17.4px;font-family:'Liberation Mono',monospace;color:#0b7f2c;letter-spacing:-0.012px;transform:scaleY(1.1);transform-origin:0 13.33px;">% Create axes for the current and torque</div>
<div class="r" style="left:157px;top:548.26px;width:120.73px;height:21.69px;background:#fcf6c4"></div>
<div class="t" style="left:79.56px;top:551.83px;font-size:17.4px;line-height:17.4px;font-family:'Liberation Mono',monospace;color:#555555;letter-spacing:0.000px;transform:scaleY(1.1);transform-origin:0 13.33px;">5</div>
<div class="t" style="left:163.00px;top:551.83px;font-size:17.4px;line-height:17.4px;font-family:'Liberation Mono',monospace;color:#1a1a1a;letter-spacing:-0.013px;transform:scaleY(1.1);transform-origin:0 13.33px;">yyaxis </div>
<div class="t" style="left:236.01px;top:551.83px;font-size:17.4px;line-height:17.4px;font-family:'Liberation Mono',monospace;color:#7d3ca8;letter-spacing:-0.015px;transform:scaleY(1.1);transform-origin:0 13.33px;">left</div>
<div class="r" style="left:157px;top:570.55px;width:381.48px;height:21.69px;background:#fcf6c4"></div>
<div class="t" style="left:79.56px;top:574.12px;font-size:17.4px;line-height:17.4px;font-family:'Liberation Mono',monospace;color:#555555;letter-spacing:0.000px;transform:scaleY(1.1);transform-origin:0 13.33px;">6</div>
<div class="t" style="left:163.00px;top:574.12px;font-size:17.4px;line-height:17.4px;font-family:'Liberation Mono',monospace;color:#1a1a1a;letter-spacing:-0.012px;transform:scaleY(1.1);transform-origin:0 13.33px;">plot(time, current, </div>
<div class="t" style="left:371.60px;top:574.12px;font-size:17.4px;line-height:17.4px;font-family:'Liberation Mono',monospace;color:#7d3ca8;letter-spacing:-0.012px;transform:scaleY(1.1);transform-origin:0 13.33px;">&#x27;LineWidth&#x27;</div>
<div class="t" style="left:486.33px;top:574.12px;font-size:17.4px;line-height:17.4px;font-family:'Liberation Mono',monospace;color:#1a1a1a;letter-spacing:-0.014px;transform:scaleY(1.1);transform-origin:0 13.33px;">, 1);</div>
<div class="r" style="left:157px;top:592.84px;width:235.46px;height:21.69px;background:#fcf6c4"></div>
<div class="t" style="left:79.56px;top:596.41px;font-size:17.4px;line-height:17.4px;font-family:'Liberation Mono',monospace;color:#555555;letter-spacing:0.000px;transform:scaleY(1.1);transform-origin:0 13.33px;">7</div>
<div class="t" style="left:163.00px;top:596.41px;font-size:17.4px;line-height:17.4px;font-family:'Liberation Mono',monospace;color:#1a1a1a;letter-spacing:-0.013px;transform:scaleY(1.1);transform-origin:0 13.33px;">ylabel(</div>
<div class="t" style="left:236.01px;top:596.41px;font-size:17.4px;line-height:17.4px;font-family:'Liberation Mono',monospace;color:#7d3ca8;letter-spacing:-0.012px;transform:scaleY(1.1);transform-origin:0 13.33px;">&#x27;Current (A)&#x27;</div>
<div class="t" style="left:371.60px;top:596.41px;font-size:17.4px;line-height:17.4px;font-family:'Liberation Mono',monospace;color:#1a1a1a;letter-spacing:-0.023px;transform:scaleY(1.1);transform-origin:0 13.33px;">);</div>
<div class="r" style="left:157px;top:615.13px;width:79.01px;height:21.69px;background:#fcf6c4"></div>
<div class="t" style="left:79.56px;top:618.70px;font-size:17.4px;line-height:17.4px;font-family:'Liberation Mono',monospace;color:#555555;letter-spacing:0.000px;transform:scaleY(1.1);transform-origin:0 13.33px;">8</div>
<div class="t" style="left:163.00px;top:618.70px;font-size:17.4px;line-height:17.4px;font-family:'Liberation Mono',monospace;color:#1a1a1a;letter-spacing:-0.014px;transform:scaleY(1.1);transform-origin:0 13.33px;">grid </div>
<div class="t" style="left:215.15px;top:618.70px;font-size:17.4px;line-height:17.4px;font-family:'Liberation Mono',monospace;color:#7d3ca8;letter-spacing:-0.023px;transform:scaleY(1.1);transform-origin:0 13.33px;">on</div>
<div class="r" style="left:157px;top:637.42px;width:412.77px;height:21.69px;background:#fcf6c4"></div>
<div class="t" style="left:79.56px;top:640.99px;font-size:17.4px;line-height:17.4px;font-family:'Liberation Mono',monospace;color:#555555;letter-spacing:0.000px;transform:scaleY(1.1);transform-origin:0 13.33px;">9</div>
<div class="t" style="left:163.00px;top:640.99px;font-size:17.4px;line-height:17.4px;font-family:'Liberation Mono',monospace;color:#1a1a1a;letter-spacing:-0.014px;transform:scaleY(1.1);transform-origin:0 13.33px;">title(</div>
<div class="t" style="left:225.58px;top:640.99px;font-size:17.4px;line-height:17.4px;font-family:'Liberation Mono',monospace;color:#7d3ca8;letter-spacing:-0.012px;transform:scaleY(1.1);transform-origin:0 13.33px;">&#x27;Motor Current and Load Torque&#x27;</div>
<div class="t" style="left:548.91px;top:640.99px;font-size:17.4px;line-height:17.4px;font-family:'Liberation Mono',monospace;color:#1a1a1a;letter-spacing:-0.023px;transform:scaleY(1.1);transform-origin:0 13.33px;">);</div>
<div class="r" style="left:157px;top:659.71px;width:6.0px;height:21.69px;background:#fcf6c4"></div>
<div class="t" style="left:69.12px;top:663.28px;font-size:17.4px;line-height:17.4px;font-family:'Liberation Mono',monospace;color:#555555;letter-spacing:0.000px;transform:scaleY(1.1);transform-origin:0 13.33px;">10</div>
<div class="r" style="left:157px;top:682.0px;width:131.16px;height:21.69px;background:#fcf6c4"></div>
<div class="t" style="left:69.12px;top:685.57px;font-size:17.4px;line-height:17.4px;font-family:'Liberation Mono',monospace;color:#555555;letter-spacing:0.000px;transform:scaleY(1.1);transform-origin:0 13.33px;">11</div>
<div class="t" style="left:163.00px;top:685.57px;font-size:17.4px;line-height:17.4px;font-family:'Liberation Mono',monospace;color:#1a1a1a;letter-spacing:-0.013px;transform:scaleY(1.1);transform-origin:0 13.33px;">yyaxis </div>
<div class="t" style="left:236.01px;top:685.57px;font-size:17.4px;line-height:17.4px;font-family:'Liberation Mono',monospace;color:#7d3ca8;letter-spacing:-0.014px;transform:scaleY(1.1);transform-origin:0 13.33px;">right</div>
<div class="r" style="left:157px;top:704.29px;width:381.48px;height:21.69px;background:#fcf6c4"></div>
<div class="t" style="left:69.12px;top:707.86px;font-size:17.4px;line-height:17.4px;font-family:'Liberation Mono',monospace;color:#555555;letter-spacing:0.000px;transform:scaleY(1.1);transform-origin:0 13.33px;">12</div>
<div class="t" style="left:163.00px;top:707.86px;font-size:17.4px;line-height:17.4px;font-family:'Liberation Mono',monospace;color:#1a1a1a;letter-spacing:-0.012px;transform:scaleY(1.1);transform-origin:0 13.33px;">plot(time, -torque, </div>
<div class="t" style="left:371.60px;top:707.86px;font-size:17.4px;line-height:17.4px;font-family:'Liberation Mono',monospace;color:#7d3ca8;letter-spacing:-0.012px;transform:scaleY(1.1);transform-origin:0 13.33px;">&#x27;LineWidth&#x27;</div>
<div class="t" style="left:486.33px;top:707.86px;font-size:17.4px;line-height:17.4px;font-family:'Liberation Mono',monospace;color:#1a1a1a;letter-spacing:-0.014px;transform:scaleY(1.1);transform-origin:0 13.33px;">, 1);</div>
<div class="r" style="left:157px;top:726.58px;width:245.89px;height:21.69px;background:#fcf6c4"></div>
<div class="t" style="left:69.12px;top:730.15px;font-size:17.4px;line-height:17.4px;font-family:'Liberation Mono',monospace;color:#555555;letter-spacing:0.000px;transform:scaleY(1.1);transform-origin:0 13.33px;">13</div>
<div class="t" style="left:163.00px;top:730.15px;font-size:17.4px;line-height:17.4px;font-family:'Liberation Mono',monospace;color:#1a1a1a;letter-spacing:-0.013px;transform:scaleY(1.1);transform-origin:0 13.33px;">ylabel(</div>
<div class="t" style="left:236.01px;top:730.15px;font-size:17.4px;line-height:17.4px;font-family:'Liberation Mono',monospace;color:#7d3ca8;letter-spacing:-0.012px;transform:scaleY(1.1);transform-origin:0 13.33px;">&#x27;Torque (N*m)&#x27;</div>
<div class="t" style="left:382.03px;top:730.15px;font-size:17.4px;line-height:17.4px;font-family:'Liberation Mono',monospace;color:#1a1a1a;letter-spacing:-0.023px;transform:scaleY(1.1);transform-origin:0 13.33px;">);</div>
<div class="r" style="left:157px;top:748.87px;width:204.17px;height:21.69px;background:#fcf6c4"></div>
<div class="t" style="left:69.12px;top:752.44px;font-size:17.4px;line-height:17.4px;font-family:'Liberation Mono',monospace;color:#555555;letter-spacing:0.000px;transform:scaleY(1.1);transform-origin:0 13.33px;">14</div>
<div class="t" style="left:163.00px;top:752.44px;font-size:17.4px;line-height:17.4px;font-family:'Liberation Mono',monospace;color:#1a1a1a;letter-spacing:-0.012px;transform:scaleY(1.1);transform-origin:0 13.33px;">ylim([-3e-4 5e-5]);</div>
<div class="r" style="left:157px;top:771.16px;width:6.0px;height:21.69px;background:#fcf6c4"></div>
<div class="t" style="left:69.12px;top:774.73px;font-size:17.4px;line-height:17.4px;font-family:'Liberation Mono',monospace;color:#555555;letter-spacing:0.000px;transform:scaleY(1.1);transform-origin:0 13.33px;">15</div>
<div class="r" style="left:157px;top:793.45px;width:193.74px;height:21.69px;background:#fcf6c4"></div>
<div class="t" style="left:69.12px;top:797.02px;font-size:17.4px;line-height:17.4px;font-family:'Liberation Mono',monospace;color:#555555;letter-spacing:0.000px;transform:scaleY(1.1);transform-origin:0 13.33px;">16</div>
<div class="t" style="left:163.00px;top:797.02px;font-size:17.4px;line-height:17.4px;font-family:'Liberation Mono',monospace;color:#0b7f2c;letter-spacing:-0.012px;transform:scaleY(1.1);transform-origin:0 13.33px;">% Add x-axis label</div>
<div class="r" style="left:157px;top:815.74px;width:204.17px;height:21.69px;background:#fcf6c4"></div>
<div class="t" style="left:69.12px;top:819.31px;font-size:17.4px;line-height:17.4px;font-family:'Liberation Mono',monospace;color:#555555;letter-spacing:0.000px;transform:scaleY(1.1);transform-origin:0 13.33px;">17</div>
<div class="t" style="left:163.00px;top:819.31px;font-size:17.4px;line-height:17.4px;font-family:'Liberation Mono',monospace;color:#1a1a1a;letter-spacing:-0.013px;transform:scaleY(1.1);transform-origin:0 13.33px;">xlabel(</div>
<div class="t" style="left:236.01px;top:819.31px;font-size:17.4px;line-height:17.4px;font-family:'Liberation Mono',monospace;color:#7d3ca8;letter-spacing:-0.013px;transform:scaleY(1.1);transform-origin:0 13.33px;">&#x27;Time (s)&#x27;</div>
<div class="t" style="left:340.31px;top:819.31px;font-size:17.4px;line-height:17.4px;font-family:'Liberation Mono',monospace;color:#1a1a1a;letter-spacing:-0.023px;transform:scaleY(1.1);transform-origin:0 13.33px;">);</div>
<div class="r" style="left:157px;top:838.03px;width:6.0px;height:21.69px;background:#fcf6c4"></div>
<div class="t" style="left:69.12px;top:841.60px;font-size:17.4px;line-height:17.4px;font-family:'Liberation Mono',monospace;color:#555555;letter-spacing:0.000px;transform:scaleY(1.1);transform-origin:0 13.33px;">18</div>
</div>
<div class="r" style="left:46px;top:855px;width:952px;height:1px;background:#c6c7c7"></div>
<svg class="r" style="left:970px;top:285px" width="24" height="24" viewBox="0 0 24 24"><circle cx="12" cy="12" r="11.3" fill="#14803c"/><path d="M6.5 12.5 l3.8 3.8 l7.5 -8" fill="none" stroke="#fff" stroke-width="2.6"/></svg>
<div class="r" style="left:157px;top:286px;width:689px;height:166px;background:#f5f6f6;border:1.5px solid #8c8d8d;box-sizing:border-box"></div>
<div class="r" style="left:170px;top:299px;width:640px;height:64px;background:#ffffff;border:1.3px solid #9a9b9b;border-radius:6px;box-sizing:border-box"></div>
<svg class="r" style="left:182px;top:322px" width="18" height="19" viewBox="0 0 18 19"><polygon points="11.50,1.00 12.63,6.37 18.00,7.50 12.63,8.63 11.50,14.00 10.37,8.63 5.00,7.50 10.37,6.37" fill="none" stroke="#444" stroke-width="1.1" stroke-linejoin="round"/><polygon points="4.30,10.80 4.94,13.66 7.80,14.30 4.94,14.94 4.30,17.80 3.66,14.94 0.80,14.30 3.66,13.66" fill="#444"/></svg>
<div class="t" style="left:206.00px;top:313.96px;font-size:16px;line-height:16px;font-family:'Liberation Sans',sans-serif;color:#1c1c1c;letter-spacing:0.575px;">Put both lines on the same chart, with torque on the left and current on</div>
<div class="t" style="left:206.00px;top:334.26px;font-size:16px;line-height:16px;font-family:'Liberation Sans',sans-serif;color:#1c1c1c;letter-spacing:0.711px;">the right</div>
<svg class="r" style="left:773px;top:319px" width="24" height="23" viewBox="0 0 24 23"><path d="M1.5 1.5 L22.5 11.5 L1.5 21.5 L5 11.5 Z M5 11.5 H22.5" fill="none" stroke="#555" stroke-width="1.3" stroke-linejoin="round"/></svg>
<div class="t" style="left:170.00px;top:378.96px;font-size:16px;line-height:16px;font-family:'Liberation Sans',sans-serif;color:#555555;letter-spacing:0.608px;">Generated code might be inaccurate. Validate before use.</div>
<div class="r" style="left:170px;top:409.3px;width:67px;height:31px;background:#f8f9f9;border:1.3px solid #3f86d6;border-radius:6px;box-sizing:border-box"></div>
<div class="t" style="left:177.00px;top:417.36px;font-size:16px;line-height:16px;font-family:'Liberation Sans',sans-serif;color:#1c1c1c;letter-spacing:0.737px;">Accept</div>
<div class="r" style="left:249px;top:409.3px;width:72.5px;height:31px;background:#f8f9f9;border:1.2px solid #8e8f8f;border-radius:6px;box-sizing:border-box"></div>
<div class="t" style="left:256.40px;top:417.36px;font-size:16px;line-height:16px;font-family:'Liberation Sans',sans-serif;color:#1c1c1c;letter-spacing:0.544px;">Discard</div>
<div class="r" style="left:334px;top:409.3px;width:82px;height:31px;background:#f8f9f9;border:1.2px solid #8e8f8f;border-radius:6px;box-sizing:border-box"></div>
<div class="t" style="left:341.40px;top:417.36px;font-size:16px;line-height:16px;font-family:'Liberation Sans',sans-serif;color:#1c1c1c;letter-spacing:0.631px;">View Diff</div>
<div class="r" style="left:723px;top:409px;width:38.5px;height:31.5px;background:#f8f9f9;border:1.2px solid #8e8f8f;border-radius:6px;box-sizing:border-box"></div>
<div class="r" style="left:772.5px;top:409px;width:37.5px;height:31.5px;background:#f8f9f9;border:1.2px solid #8e8f8f;border-radius:6px;box-sizing:border-box"></div>
<svg class="r" style="left:730px;top:414px" width="24" height="22" viewBox="0 0 24 22"><path d="M2 10 h4 v10 h-4 z M6 10.5 l4.5 -8 a2 2 0 0 1 3 1.5 l-1 5 h6.5 a2 2 0 0 1 2 2.5 l-2 8 a2 2 0 0 1 -2 1.5 h-11" fill="none" stroke="#555" stroke-width="1.3" stroke-linejoin="round"/></svg>
<svg class="r" style="left:779px;top:414px" width="24" height="22" viewBox="0 0 24 22"><g transform="translate(24,22) rotate(180)"><path d="M2 10 h4 v10 h-4 z M6 10.5 l4.5 -8 a2 2 0 0 1 3 1.5 l-1 5 h6.5 a2 2 0 0 1 2 2.5 l-2 8 a2 2 0 0 1 -2 1.5 h-11" fill="none" stroke="#555" stroke-width="1.3" stroke-linejoin="round"/></g></svg>
<svg class="r" style="left:1005px;top:231px" width="6" height="11" viewBox="0 0 6 11"><path d="M0 0.5 h6 M0 3.5 h6 M0 6.5 h6 M0 9.5 h6" stroke="#8a8a8a" stroke-width="1"/></svg>
<div class="r" style="left:1019px;top:222px;width:1px;height:29px;background:#c6c7c7"></div>
<div class="r" style="left:1019px;top:222px;width:95px;height:29px;background:#ffffff"></div>
<div class="r" style="left:1019.5px;top:221.3px;width:94px;height:3px;background:#9a9a9a"></div>
<div class="r" style="left:1113.5px;top:222px;width:1px;height:29px;background:#c6c7c7"></div>
<div class="t" style="left:1030.40px;top:231.27px;font-size:14.8px;line-height:14.8px;font-family:'Liberation Sans',sans-serif;color:#333333;letter-spacing:0.315px;">Figure 1</div>
<svg class="r" style="left:1094px;top:233px" width="12" height="12" viewBox="0 0 12 12"><path d="M1 1 L11 11 M11 1 L1 11" stroke="#444" stroke-width="1.3"/></svg>
<div class="r" style="left:1922.5px;top:230.5px;width:2px;height:2px;background:#4a4a4a;border-radius:50%"></div>
<div class="r" style="left:1922.5px;top:235.5px;width:2px;height:2px;background:#4a4a4a;border-radius:50%"></div>
<div class="r" style="left:1922.5px;top:240.5px;width:2px;height:2px;background:#4a4a4a;border-radius:50%"></div>
<svg class="r" style="left:0;top:0" width="1999" height="1125" viewBox="0 0 1999 1125"><rect x="1122.7" y="296.6" width="738.0" height="204.59999999999997" fill="#fff"/><line x1="1196.50" y1="296.6" x2="1196.50" y2="501.2" stroke="#dcdcdc" stroke-width="1"/><line x1="1270.30" y1="296.6" x2="1270.30" y2="501.2" stroke="#dcdcdc" stroke-width="1"/><line x1="1344.10" y1="296.6" x2="1344.10" y2="501.2" stroke="#dcdcdc" stroke-width="1"/><line x1="1417.90" y1="296.6" x2="1417.90" y2="501.2" stroke="#dcdcdc" stroke-width="1"/><line x1="1491.70" y1="296.6" x2="1491.70" y2="501.2" stroke="#dcdcdc" stroke-width="1"/><line x1="1565.50" y1="296.6" x2="1565.50" y2="501.2" stroke="#dcdcdc" stroke-width="1"/><line x1="1639.30" y1="296.6" x2="1639.30" y2="501.2" stroke="#dcdcdc" stroke-width="1"/><line x1="1713.10" y1="296.6" x2="1713.10" y2="501.2" stroke="#dcdcdc" stroke-width="1"/><line x1="1786.90" y1="296.6" x2="1786.90" y2="501.2" stroke="#dcdcdc" stroke-width="1"/><line x1="1122.7" y1="450.05" x2="1860.7" y2="450.05" stroke="#dcdcdc" stroke-width="1"/><line x1="1122.7" y1="398.90" x2="1860.7" y2="398.90" stroke="#dcdcdc" stroke-width="1"/><line x1="1122.7" y1="347.75" x2="1860.7" y2="347.75" stroke="#dcdcdc" stroke-width="1"/><polyline points="1122.70,501.20 1122.70,305.30 1124.55,316.18 1126.39,326.41 1128.24,336.03 1130.08,345.06 1131.92,353.55 1133.77,361.53 1135.62,369.03 1137.46,376.08 1139.31,382.70 1141.15,388.93 1143.00,394.78 1144.84,400.27 1146.68,405.44 1148.53,410.30 1150.38,414.86 1152.22,419.15 1154.07,423.18 1155.91,426.96 1157.76,430.52 1159.60,433.87 1161.44,437.01 1163.29,439.96 1165.13,442.74 1166.98,445.35 1168.83,447.80 1170.67,450.10 1172.52,452.27 1174.36,454.30 1176.21,456.22 1178.05,458.01 1179.89,459.70 1181.74,461.29 1183.59,462.78 1185.43,464.18 1187.28,465.50 1189.12,466.74 1190.97,467.90 1192.81,469.00 1194.65,470.02 1196.50,470.99 1198.35,471.90 1200.19,472.75 1202.04,473.55 1203.88,474.30 1205.73,475.01 1207.57,475.68 1209.41,476.30 1211.26,476.89 1213.11,477.44 1214.95,477.96 1216.80,478.45 1218.64,478.91 1220.49,479.34 1222.33,479.74 1224.17,480.12 1226.02,480.48 1227.87,480.82 1229.71,481.13 1231.56,481.43 1233.40,481.71 1235.25,481.97 1237.09,482.22 1238.93,482.45 1240.78,482.67 1242.62,482.87 1244.47,483.06 1246.32,483.24 1248.16,483.41 1250.01,483.57 1251.85,483.72 1253.70,483.86 1255.54,483.99 1257.38,484.12 1259.23,484.24 1261.08,484.35 1262.92,484.45 1264.77,484.55 1266.61,484.64 1268.45,484.72 1270.30,484.80 1272.14,484.88 1273.99,484.95 1275.84,485.02 1277.68,485.08 1279.53,485.14 1281.37,485.19 1283.22,485.25 1285.06,485.30 1286.90,485.34 1288.75,485.38 1290.60,485.43 1292.44,485.46 1294.29,485.50 1296.13,485.53 1297.97,485.56 1299.82,485.59 1301.66,485.62 1303.51,485.65 1305.36,485.67 1307.20,485.70 1309.05,485.72 1310.89,485.74 1312.74,485.76 1314.58,485.78 1316.42,485.79 1318.27,485.81 1320.12,485.82 1321.96,485.84 1323.81,485.85 1325.65,485.86 1327.50,485.88 1329.34,485.89 1331.18,485.90 1333.03,485.91 1334.88,485.92 1336.72,485.93 1338.57,485.93 1340.41,485.94 1342.26,485.95 1344.10,485.95 1345.95,485.96 1347.79,485.97 1349.63,485.97 1351.48,485.98 1353.33,485.98 1355.17,485.99 1357.02,485.99 1358.86,486.00 1360.70,486.00 1362.55,486.00 1364.39,486.01 1366.24,486.01 1368.09,486.01 1369.93,486.02 1371.78,486.02 1373.62,486.02 1375.47,486.02 1377.31,486.03 1379.15,486.03 1381.00,486.03 1382.85,486.03 1384.69,486.03 1386.54,486.03 1388.38,486.04 1390.22,486.04 1392.07,486.04 1393.91,486.04 1395.76,486.04 1397.61,486.04 1399.45,486.04 1401.30,486.04 1403.14,486.05 1404.99,486.05 1406.83,486.05 1408.67,486.05 1410.52,486.05 1412.37,486.05 1414.21,486.05 1416.06,486.05 1417.90,486.05 1419.74,486.05 1421.59,486.05 1423.43,486.05 1425.28,486.05 1427.12,486.05 1428.97,486.05 1430.82,486.05 1432.66,486.05 1434.51,486.05 1436.35,486.05 1438.20,486.06 1440.04,486.06 1441.88,486.06 1443.73,486.06 1445.58,486.06 1447.42,486.06 1449.27,486.06 1451.11,486.06 1452.95,486.06 1454.80,486.06 1456.64,486.06 1458.49,486.06 1460.34,486.06 1462.18,486.06 1464.03,486.06 1465.87,486.06 1467.72,486.06 1469.56,486.06 1471.41,486.06 1473.25,486.06 1475.10,486.06 1476.94,486.06 1478.79,486.06 1480.63,486.06 1482.47,486.06 1484.32,486.06 1486.16,486.06 1488.01,486.06 1489.86,486.06 1491.70,486.06 1493.55,475.31 1495.39,465.21 1497.24,455.72 1499.08,446.80 1500.92,438.42 1502.77,430.54 1504.62,423.13 1506.46,416.18 1508.31,409.64 1510.15,403.49 1512.00,397.72 1513.84,392.29 1515.68,387.19 1517.53,382.40 1519.38,377.89 1521.22,373.66 1523.07,369.68 1524.91,365.94 1526.76,362.43 1528.60,359.13 1530.45,356.02 1532.29,353.11 1534.13,350.37 1535.98,347.79 1537.83,345.37 1539.67,343.09 1541.52,340.96 1543.36,338.95 1545.20,337.06 1547.05,335.29 1548.89,333.62 1550.74,332.05 1552.59,330.58 1554.43,329.19 1556.28,327.89 1558.12,326.67 1559.97,325.52 1561.81,324.44 1563.65,323.43 1565.50,322.48 1567.35,321.58 1569.19,320.74 1571.04,319.95 1572.88,319.20 1574.72,318.50 1576.57,317.85 1578.41,317.23 1580.26,316.65 1582.11,316.10 1583.95,315.59 1585.80,315.11 1587.64,314.66 1589.49,314.23 1591.33,313.83 1593.17,313.46 1595.02,313.10 1596.87,312.77 1598.71,312.46 1600.56,312.17 1602.40,311.89 1604.24,311.63 1606.09,311.39 1607.93,311.16 1609.78,310.95 1611.62,310.75 1613.47,310.56 1615.32,310.38 1617.16,310.21 1619.01,310.05 1620.85,309.91 1622.70,309.77 1624.54,309.64 1626.38,309.51 1628.23,309.40 1630.08,309.29 1631.92,309.19 1633.77,309.09 1635.61,309.00 1637.45,308.92 1639.30,308.84 1641.14,308.76 1642.99,308.69 1644.84,308.63 1646.68,308.56 1648.53,308.51 1650.37,308.45 1652.22,308.40 1654.06,308.35 1655.91,308.31 1657.75,308.26 1659.60,308.22 1661.44,308.19 1663.28,308.15 1665.13,308.12 1666.97,308.09 1668.82,308.06 1670.66,308.03 1672.51,308.00 1674.36,307.98 1676.20,307.96 1678.05,307.93 1679.89,307.91 1681.74,307.89 1683.58,307.88 1685.43,307.86 1687.27,307.84 1689.12,307.83 1690.96,307.82 1692.81,307.80 1694.65,307.79 1696.49,307.78 1698.34,307.77 1700.18,307.76 1702.03,307.75 1703.88,307.74 1705.72,307.73 1707.57,307.72 1709.41,307.71 1711.26,307.71 1713.10,307.70 1714.95,307.69 1716.79,307.69 1718.64,307.68 1720.48,307.68 1722.33,307.67 1724.17,307.67 1726.02,307.66 1727.86,307.66 1729.70,307.66 1731.55,307.65 1733.39,307.65 1735.24,307.65 1737.09,307.64 1738.93,307.64 1740.78,307.64 1742.62,307.64 1744.47,307.63 1746.31,307.63 1748.15,307.63 1750.00,307.63 1751.85,307.63 1753.69,307.62 1755.54,307.62 1757.38,307.62 1759.22,307.62 1761.07,307.62 1762.91,307.62 1764.76,307.62 1766.61,307.61 1768.45,307.61 1770.30,307.61 1772.14,307.61 1773.99,307.61 1775.83,307.61 1777.68,307.61 1779.52,307.61 1781.37,307.61 1783.21,307.61 1785.06,307.61 1786.90,307.61 1788.74,307.61 1790.59,307.60 1792.43,307.60 1794.28,307.60 1796.12,307.60 1797.97,307.60 1799.82,307.60 1801.66,307.60 1803.51,307.60 1805.35,307.60 1807.20,307.60 1809.04,307.60 1810.89,307.60 1812.73,307.60 1814.58,307.60 1816.42,307.60 1818.26,307.60 1820.11,307.60 1821.95,307.60 1823.80,307.60 1825.64,307.60 1827.49,307.60 1829.34,307.60 1831.18,307.60 1833.03,307.60 1834.87,307.60 1836.72,307.60 1838.56,307.60 1840.41,307.60 1842.25,307.60 1844.10,307.60 1845.94,307.60 1847.78,307.60 1849.63,307.60 1851.47,307.60 1853.32,307.60 1855.16,307.60 1857.01,307.60 1858.86,307.60 1860.70,307.60" fill="none" stroke="#0072bd" stroke-width="2" stroke-linejoin="round"/><line x1="1122.70" y1="501.2" x2="1122.70" y2="494.2" stroke="#262626" stroke-width="1.1"/><line x1="1122.70" y1="296.6" x2="1122.70" y2="303.6" stroke="#262626" stroke-width="1.1"/><line x1="1196.50" y1="501.2" x2="1196.50" y2="494.2" stroke="#262626" stroke-width="1.1"/><line x1="1196.50" y1="296.6" x2="1196.50" y2="303.6" stroke="#262626" stroke-width="1.1"/><line x1="1270.30" y1="501.2" x2="1270.30" y2="494.2" stroke="#262626" stroke-width="1.1"/><line x1="1270.30" y1="296.6" x2="1270.30" y2="303.6" stroke="#262626" stroke-width="1.1"/><line x1="1344.10" y1="501.2" x2="1344.10" y2="494.2" stroke="#262626" stroke-width="1.1"/><line x1="1344.10" y1="296.6" x2="1344.10" y2="303.6" stroke="#262626" stroke-width="1.1"/><line x1="1417.90" y1="501.2" x2="1417.90" y2="494.2" stroke="#262626" stroke-width="1.1"/><line x1="1417.90" y1="296.6" x2="1417.90" y2="303.6" stroke="#262626" stroke-width="1.1"/><line x1="1491.70" y1="501.2" x2="1491.70" y2="494.2" stroke="#262626" stroke-width="1.1"/><line x1="1491.70" y1="296.6" x2="1491.70" y2="303.6" stroke="#262626" stroke-width="1.1"/><line x1="1565.50" y1="501.2" x2="1565.50" y2="494.2" stroke="#262626" stroke-width="1.1"/><line x1="1565.50" y1="296.6" x2="1565.50" y2="303.6" stroke="#262626" stroke-width="1.1"/><line x1="1639.30" y1="501.2" x2="1639.30" y2="494.2" stroke="#262626" stroke-width="1.1"/><line x1="1639.30" y1="296.6" x2="1639.30" y2="303.6" stroke="#262626" stroke-width="1.1"/><line x1="1713.10" y1="501.2" x2="1713.10" y2="494.2" stroke="#262626" stroke-width="1.1"/><line x1="1713.10" y1="296.6" x2="1713.10" y2="303.6" stroke="#262626" stroke-width="1.1"/><line x1="1786.90" y1="501.2" x2="1786.90" y2="494.2" stroke="#262626" stroke-width="1.1"/><line x1="1786.90" y1="296.6" x2="1786.90" y2="303.6" stroke="#262626" stroke-width="1.1"/><line x1="1860.70" y1="501.2" x2="1860.70" y2="494.2" stroke="#262626" stroke-width="1.1"/><line x1="1860.70" y1="296.6" x2="1860.70" y2="303.6" stroke="#262626" stroke-width="1.1"/><line x1="1122.7" y1="501.20" x2="1129.7" y2="501.20" stroke="#262626" stroke-width="1.1"/><line x1="1860.7" y1="501.20" x2="1853.7" y2="501.20" stroke="#262626" stroke-width="1.1"/><line x1="1122.7" y1="450.05" x2="1129.7" y2="450.05" stroke="#262626" stroke-width="1.1"/><line x1="1860.7" y1="450.05" x2="1853.7" y2="450.05" stroke="#262626" stroke-width="1.1"/><line x1="1122.7" y1="398.90" x2="1129.7" y2="398.90" stroke="#262626" stroke-width="1.1"/><line x1="1860.7" y1="398.90" x2="1853.7" y2="398.90" stroke="#262626" stroke-width="1.1"/><line x1="1122.7" y1="347.75" x2="1129.7" y2="347.75" stroke="#262626" stroke-width="1.1"/><line x1="1860.7" y1="347.75" x2="1853.7" y2="347.75" stroke="#262626" stroke-width="1.1"/><line x1="1122.7" y1="296.60" x2="1129.7" y2="296.60" stroke="#262626" stroke-width="1.1"/><line x1="1860.7" y1="296.60" x2="1853.7" y2="296.60" stroke="#262626" stroke-width="1.1"/><rect x="1122.7" y="296.6" width="738.0" height="204.59999999999997" fill="none" stroke="#262626" stroke-width="1.05"/><text x="1117.5" y="508.30" text-anchor="end" font-family="Liberation Sans" font-size="16.5" fill="#262626">0</text><text x="1117.5" y="457.15" text-anchor="end" font-family="Liberation Sans" font-size="16.5" fill="#262626">0.1</text><text x="1117.5" y="406.00" text-anchor="end" font-family="Liberation Sans" font-size="16.5" fill="#262626">0.2</text><text x="1117.5" y="354.85" text-anchor="end" font-family="Liberation Sans" font-size="16.5" fill="#262626">0.3</text><text x="1117.5" y="303.70" text-anchor="end" font-family="Liberation Sans" font-size="16.5" fill="#262626">0.4</text><text x="1122.70" y="522.8" text-anchor="middle" font-family="Liberation Sans" font-size="16.5" fill="#262626">0</text><text x="1196.50" y="522.8" text-anchor="middle" font-family="Liberation Sans" font-size="16.5" fill="#262626">0.02</text><text x="1270.30" y="522.8" text-anchor="middle" font-family="Liberation Sans" font-size="16.5" fill="#262626">0.04</text><text x="1344.10" y="522.8" text-anchor="middle" font-family="Liberation Sans" font-size="16.5" fill="#262626">0.06</text><text x="1417.90" y="522.8" text-anchor="middle" font-family="Liberation Sans" font-size="16.5" fill="#262626">0.08</text><text x="1491.70" y="522.8" text-anchor="middle" font-family="Liberation Sans" font-size="16.5" fill="#262626">0.1</text><text x="1565.50" y="522.8" text-anchor="middle" font-family="Liberation Sans" font-size="16.5" fill="#262626">0.12</text><text x="1639.30" y="522.8" text-anchor="middle" font-family="Liberation Sans" font-size="16.5" fill="#262626">0.14</text><text x="1713.10" y="522.8" text-anchor="middle" font-family="Liberation Sans" font-size="16.5" fill="#262626">0.16</text><text x="1786.90" y="522.8" text-anchor="middle" font-family="Liberation Sans" font-size="16.5" fill="#262626">0.18</text><text x="1860.70" y="522.8" text-anchor="middle" font-family="Liberation Sans" font-size="16.5" fill="#262626">0.2</text><text x="1491.7" y="289.7" text-anchor="middle" font-family="Liberation Sans" font-weight="bold" font-size="18" fill="#000">Motor Current</text><text transform="translate(1086.3,398.6) rotate(-90)" text-anchor="middle" font-family="Liberation Sans" font-size="18" fill="#262626">Current (A)</text><rect x="1122.7" y="584.9" width="738.0" height="203.39999999999998" fill="#fff"/><line x1="1196.50" y1="584.9" x2="1196.50" y2="788.3" stroke="#dcdcdc" stroke-width="1"/><line x1="1270.30" y1="584.9" x2="1270.30" y2="788.3" stroke="#dcdcdc" stroke-width="1"/><line x1="1344.10" y1="584.9" x2="1344.10" y2="788.3" stroke="#dcdcdc" stroke-width="1"/><line x1="1417.90" y1="584.9" x2="1417.90" y2="788.3" stroke="#dcdcdc" stroke-width="1"/><line x1="1491.70" y1="584.9" x2="1491.70" y2="788.3" stroke="#dcdcdc" stroke-width="1"/><line x1="1565.50" y1="584.9" x2="1565.50" y2="788.3" stroke="#dcdcdc" stroke-width="1"/><line x1="1639.30" y1="584.9" x2="1639.30" y2="788.3" stroke="#dcdcdc" stroke-width="1"/><line x1="1713.10" y1="584.9" x2="1713.10" y2="788.3" stroke="#dcdcdc" stroke-width="1"/><line x1="1786.90" y1="584.9" x2="1786.90" y2="788.3" stroke="#dcdcdc" stroke-width="1"/><line x1="1122.7" y1="613.96" x2="1860.7" y2="613.96" stroke="#dcdcdc" stroke-width="1"/><line x1="1122.7" y1="672.07" x2="1860.7" y2="672.07" stroke="#dcdcdc" stroke-width="1"/><line x1="1122.7" y1="730.19" x2="1860.7" y2="730.19" stroke="#dcdcdc" stroke-width="1"/><polyline points="1122.7,613.96 1491.70,613.96 1491.70,753.43 1860.7,753.43" fill="none" stroke="#0072bd" stroke-width="2"/><line x1="1122.70" y1="788.3" x2="1122.70" y2="781.3" stroke="#262626" stroke-width="1.1"/><line x1="1122.70" y1="584.9" x2="1122.70" y2="591.9" stroke="#262626" stroke-width="1.1"/><line x1="1196.50" y1="788.3" x2="1196.50" y2="781.3" stroke="#262626" stroke-width="1.1"/><line x1="1196.50" y1="584.9" x2="1196.50" y2="591.9" stroke="#262626" stroke-width="1.1"/><line x1="1270.30" y1="788.3" x2="1270.30" y2="781.3" stroke="#262626" stroke-width="1.1"/><line x1="1270.30" y1="584.9" x2="1270.30" y2="591.9" stroke="#262626" stroke-width="1.1"/><line x1="1344.10" y1="788.3" x2="1344.10" y2="781.3" stroke="#262626" stroke-width="1.1"/><line x1="1344.10" y1="584.9" x2="1344.10" y2="591.9" stroke="#262626" stroke-width="1.1"/><line x1="1417.90" y1="788.3" x2="1417.90" y2="781.3" stroke="#262626" stroke-width="1.1"/><line x1="1417.90" y1="584.9" x2="1417.90" y2="591.9" stroke="#262626" stroke-width="1.1"/><line x1="1491.70" y1="788.3" x2="1491.70" y2="781.3" stroke="#262626" stroke-width="1.1"/><line x1="1491.70" y1="584.9" x2="1491.70" y2="591.9" stroke="#262626" stroke-width="1.1"/><line x1="1565.50" y1="788.3" x2="1565.50" y2="781.3" stroke="#262626" stroke-width="1.1"/><line x1="1565.50" y1="584.9" x2="1565.50" y2="591.9" stroke="#262626" stroke-width="1.1"/><line x1="1639.30" y1="788.3" x2="1639.30" y2="781.3" stroke="#262626" stroke-width="1.1"/><line x1="1639.30" y1="584.9" x2="1639.30" y2="591.9" stroke="#262626" stroke-width="1.1"/><line x1="1713.10" y1="788.3" x2="1713.10" y2="781.3" stroke="#262626" stroke-width="1.1"/><line x1="1713.10" y1="584.9" x2="1713.10" y2="591.9" stroke="#262626" stroke-width="1.1"/><line x1="1786.90" y1="788.3" x2="1786.90" y2="781.3" stroke="#262626" stroke-width="1.1"/><line x1="1786.90" y1="584.9" x2="1786.90" y2="591.9" stroke="#262626" stroke-width="1.1"/><line x1="1860.70" y1="788.3" x2="1860.70" y2="781.3" stroke="#262626" stroke-width="1.1"/><line x1="1860.70" y1="584.9" x2="1860.70" y2="591.9" stroke="#262626" stroke-width="1.1"/><line x1="1122.7" y1="613.96" x2="1129.7" y2="613.96" stroke="#262626" stroke-width="1.1"/><line x1="1860.7" y1="613.96" x2="1853.7" y2="613.96" stroke="#262626" stroke-width="1.1"/><line x1="1122.7" y1="672.07" x2="1129.7" y2="672.07" stroke="#262626" stroke-width="1.1"/><line x1="1860.7" y1="672.07" x2="1853.7" y2="672.07" stroke="#262626" stroke-width="1.1"/><line x1="1122.7" y1="730.19" x2="1129.7" y2="730.19" stroke="#262626" stroke-width="1.1"/><line x1="1860.7" y1="730.19" x2="1853.7" y2="730.19" stroke="#262626" stroke-width="1.1"/><line x1="1122.7" y1="788.30" x2="1129.7" y2="788.30" stroke="#262626" stroke-width="1.1"/><line x1="1860.7" y1="788.30" x2="1853.7" y2="788.30" stroke="#262626" stroke-width="1.1"/><rect x="1122.7" y="584.9" width="738.0" height="203.39999999999998" fill="none" stroke="#262626" stroke-width="1.05"/><text x="1117.5" y="621.06" text-anchor="end" font-family="Liberation Sans" font-size="16.5" fill="#262626">0</text><text x="1117.5" y="679.17" text-anchor="end" font-family="Liberation Sans" font-size="16.5" fill="#262626">-1</text><text x="1117.5" y="737.29" text-anchor="end" font-family="Liberation Sans" font-size="16.5" fill="#262626">-2</text><text x="1117.5" y="795.40" text-anchor="end" font-family="Liberation Sans" font-size="16.5" fill="#262626">-3</text><text x="1122.70" y="809.8" text-anchor="middle" font-family="Liberation Sans" font-size="16.5" fill="#262626">0</text><text x="1196.50" y="809.8" text-anchor="middle" font-family="Liberation Sans" font-size="16.5" fill="#262626">0.02</text><text x="1270.30" y="809.8" text-anchor="middle" font-family="Liberation Sans" font-size="16.5" fill="#262626">0.04</text><text x="1344.10" y="809.8" text-anchor="middle" font-family="Liberation Sans" font-size="16.5" fill="#262626">0.06</text><text x="1417.90" y="809.8" text-anchor="middle" font-family="Liberation Sans" font-size="16.5" fill="#262626">0.08</text><text x="1491.70" y="809.8" text-anchor="middle" font-family="Liberation Sans" font-size="16.5" fill="#262626">0.1</text><text x="1565.50" y="809.8" text-anchor="middle" font-family="Liberation Sans" font-size="16.5" fill="#262626">0.12</text><text x="1639.30" y="809.8" text-anchor="middle" font-family="Liberation Sans" font-size="16.5" fill="#262626">0.14</text><text x="1713.10" y="809.8" text-anchor="middle" font-family="Liberation Sans" font-size="16.5" fill="#262626">0.16</text><text x="1786.90" y="809.8" text-anchor="middle" font-family="Liberation Sans" font-size="16.5" fill="#262626">0.18</text><text x="1860.70" y="809.8" text-anchor="middle" font-family="Liberation Sans" font-size="16.5" fill="#262626">0.2</text><text x="1491.7" y="579.4" text-anchor="middle" font-family="Liberation Sans" font-weight="bold" font-size="18" fill="#000">Load Torque</text><text transform="translate(1092.5,687.2) rotate(-90)" text-anchor="middle" font-family="Liberation Sans" font-size="18" fill="#262626">Torque (N*m)</text><text x="1491.7" y="831.8" text-anchor="middle" font-family="Liberation Sans" font-size="18" fill="#262626">Time (s)</text><text x="1124.5" y="580.3" font-family="Liberation Sans" font-size="16.3" fill="#262626">×10</text><text x="1152" y="572.3" font-family="Liberation Sans" font-size="12.3" fill="#262626">-4</text></svg>
<div class="t" style="left:54.30px;top:864.68px;font-size:15.5px;line-height:15.5px;font-family:'Liberation Sans',sans-serif;color:#1c1c1c;letter-spacing:0.966px;">Command Window</div>
<div class="r" style="left:1927.8px;top:865px;width:2px;height:2px;background:#4a4a4a;border-radius:50%"></div>
<div class="r" style="left:1927.8px;top:870px;width:2px;height:2px;background:#4a4a4a;border-radius:50%"></div>
<div class="r" style="left:1927.8px;top:875px;width:2px;height:2px;background:#4a4a4a;border-radius:50%"></div>
<div class="t" style="left:54.30px;top:895.17px;font-size:17.4px;line-height:17.4px;font-family:'Liberation Mono',monospace;color:#1c1c1c;letter-spacing:-2.383px;transform:scaleY(1.1);transform-origin:0 13.33px;">&gt;&gt;</div>
<svg class="r" style="left:83px;top:891px" width="20" height="20" viewBox="0 0 20 20"><polygon points="12.50,1.00 13.56,5.94 18.50,7.00 13.56,8.06 12.50,13.00 11.44,8.06 6.50,7.00 11.44,5.94" fill="#555"/><polygon points="5.00,10.50 5.71,13.79 9.00,14.50 5.71,15.21 5.00,18.50 4.29,15.21 1.00,14.50 4.29,13.79" fill="#555"/></svg>
<div class="t" style="left:106.50px;top:895.17px;font-size:17.4px;line-height:17.4px;font-family:'Liberation Mono',monospace;color:#555555;letter-spacing:-0.439px;transform:scaleY(1.1);transform-origin:0 13.33px;">Press</div>
<div class="r" style="left:168.8px;top:891.8px;width:44.2px;height:21.8px;border:1.1px solid #b9b9b9;border-radius:4px;box-sizing:border-box;background:#fff"></div>
<div class="t" style="left:175.09px;top:896.13px;font-size:14.5px;line-height:14.5px;font-family:'Liberation Sans',sans-serif;font-weight:bold;color:#555555;letter-spacing:0.000px;">⇧⌘P</div>
<div class="t" style="left:224.10px;top:895.17px;font-size:17.4px;line-height:17.4px;font-family:'Liberation Mono',monospace;color:#555555;letter-spacing:-0.072px;transform:scaleY(1.1);transform-origin:0 13.33px;">to generate code with Copilot</div>
<div class="r" style="left:11.2px;top:1091.4px;width:48.3px;height:28px;border:1.1px solid #9d9e9e;border-radius:6px;box-sizing:border-box;background:#f1f2f2"></div>
<div class="r" style="left:14.0px;top:1096px;width:2.4px;height:18.5px;background:#5a5a5a"></div>
<div class="r" style="left:18.2px;top:1096px;width:2.4px;height:18.5px;background:#5a5a5a"></div>
<div class="r" style="left:22.4px;top:1096px;width:2.4px;height:18.5px;background:#5a5a5a"></div>
<div class="r" style="left:26.6px;top:1096px;width:2.4px;height:18.5px;background:#5a5a5a"></div>
<div class="r" style="left:30.8px;top:1096px;width:2.4px;height:18.5px;background:#5a5a5a"></div>
<svg class="r" style="left:43.5px;top:1100.5px" width="10" height="7" viewBox="0 0 10 7"><path d="M0 7 L5 0 L10 7 Z" fill="#555"/></svg>
<div class="r" style="left:80px;top:1091px;width:1px;height:29px;background:#c0c1c1"></div>
<svg class="r" style="left:92.5px;top:1092.5px" width="27" height="25" viewBox="0 0 27 25"><rect x="0.8" y="0.8" width="25" height="23" rx="1.5" fill="none" stroke="#666" stroke-width="1.2"/><path d="M0.8 4.3 h25" stroke="#666" stroke-width="1"/><path d="M3 6.5 l2.5 2 l-2.5 2 M6.5 6.5 l2.5 2 l-2.5 2" fill="none" stroke="#666" stroke-width="1"/></svg>
<div class="r" style="left:134px;top:1091px;width:1px;height:29px;background:#c0c1c1"></div>
<div class="r" style="left:146.9px;top:1102.8px;width:3.2px;height:3.2px;background:#888;border-radius:50%"></div>
<div class="r" style="left:154.4px;top:1102.8px;width:3.2px;height:3.2px;background:#888;border-radius:50%"></div>
<div class="r" style="left:161.9px;top:1102.8px;width:3.2px;height:3.2px;background:#888;border-radius:50%"></div>
<div class="t" style="left:1635.60px;top:1096.88px;font-size:15.5px;line-height:15.5px;font-family:'Liberation Sans',sans-serif;color:#1c1c1c;letter-spacing:-0.018px;">Editor: 110%</div>
<div class="t" style="left:1740.20px;top:1096.88px;font-size:15.5px;line-height:15.5px;font-family:'Liberation Sans',sans-serif;color:#1c1c1c;letter-spacing:-0.078px;">UTF-8</div>
<div class="t" style="left:1800.30px;top:1096.88px;font-size:15.5px;line-height:15.5px;font-family:'Liberation Sans',sans-serif;color:#1c1c1c;letter-spacing:-0.389px;">LF</div>
<div class="t" style="left:1835.00px;top:1096.88px;font-size:15.5px;line-height:15.5px;font-family:'Liberation Sans',sans-serif;color:#1c1c1c;letter-spacing:-0.004px;">Script</div>
<div class="t" style="left:1890.80px;top:1096.88px;font-size:15.5px;line-height:15.5px;font-family:'Liberation Sans',sans-serif;color:#1c1c1c;letter-spacing:-0.541px;">Ln</div>
<div class="t" style="left:1915.60px;top:1096.88px;font-size:15.5px;line-height:15.5px;font-family:'Liberation Sans',sans-serif;color:#1c1c1c;letter-spacing:-0.041px;">20</div>
<div class="t" style="left:1941.50px;top:1096.88px;font-size:15.5px;line-height:15.5px;font-family:'Liberation Sans',sans-serif;color:#1c1c1c;letter-spacing:-0.229px;">Col</div>
<div class="t" style="left:1972.60px;top:1096.88px;font-size:15.5px;line-height:15.5px;font-family:'Liberation Sans',sans-serif;color:#1c1c1c;letter-spacing:-0.241px;">34</div>
<div class="r" style="left:1997.5px;top:26px;width:1.5px;height:1099px;background:#fafafa"></div>
</body></html>
